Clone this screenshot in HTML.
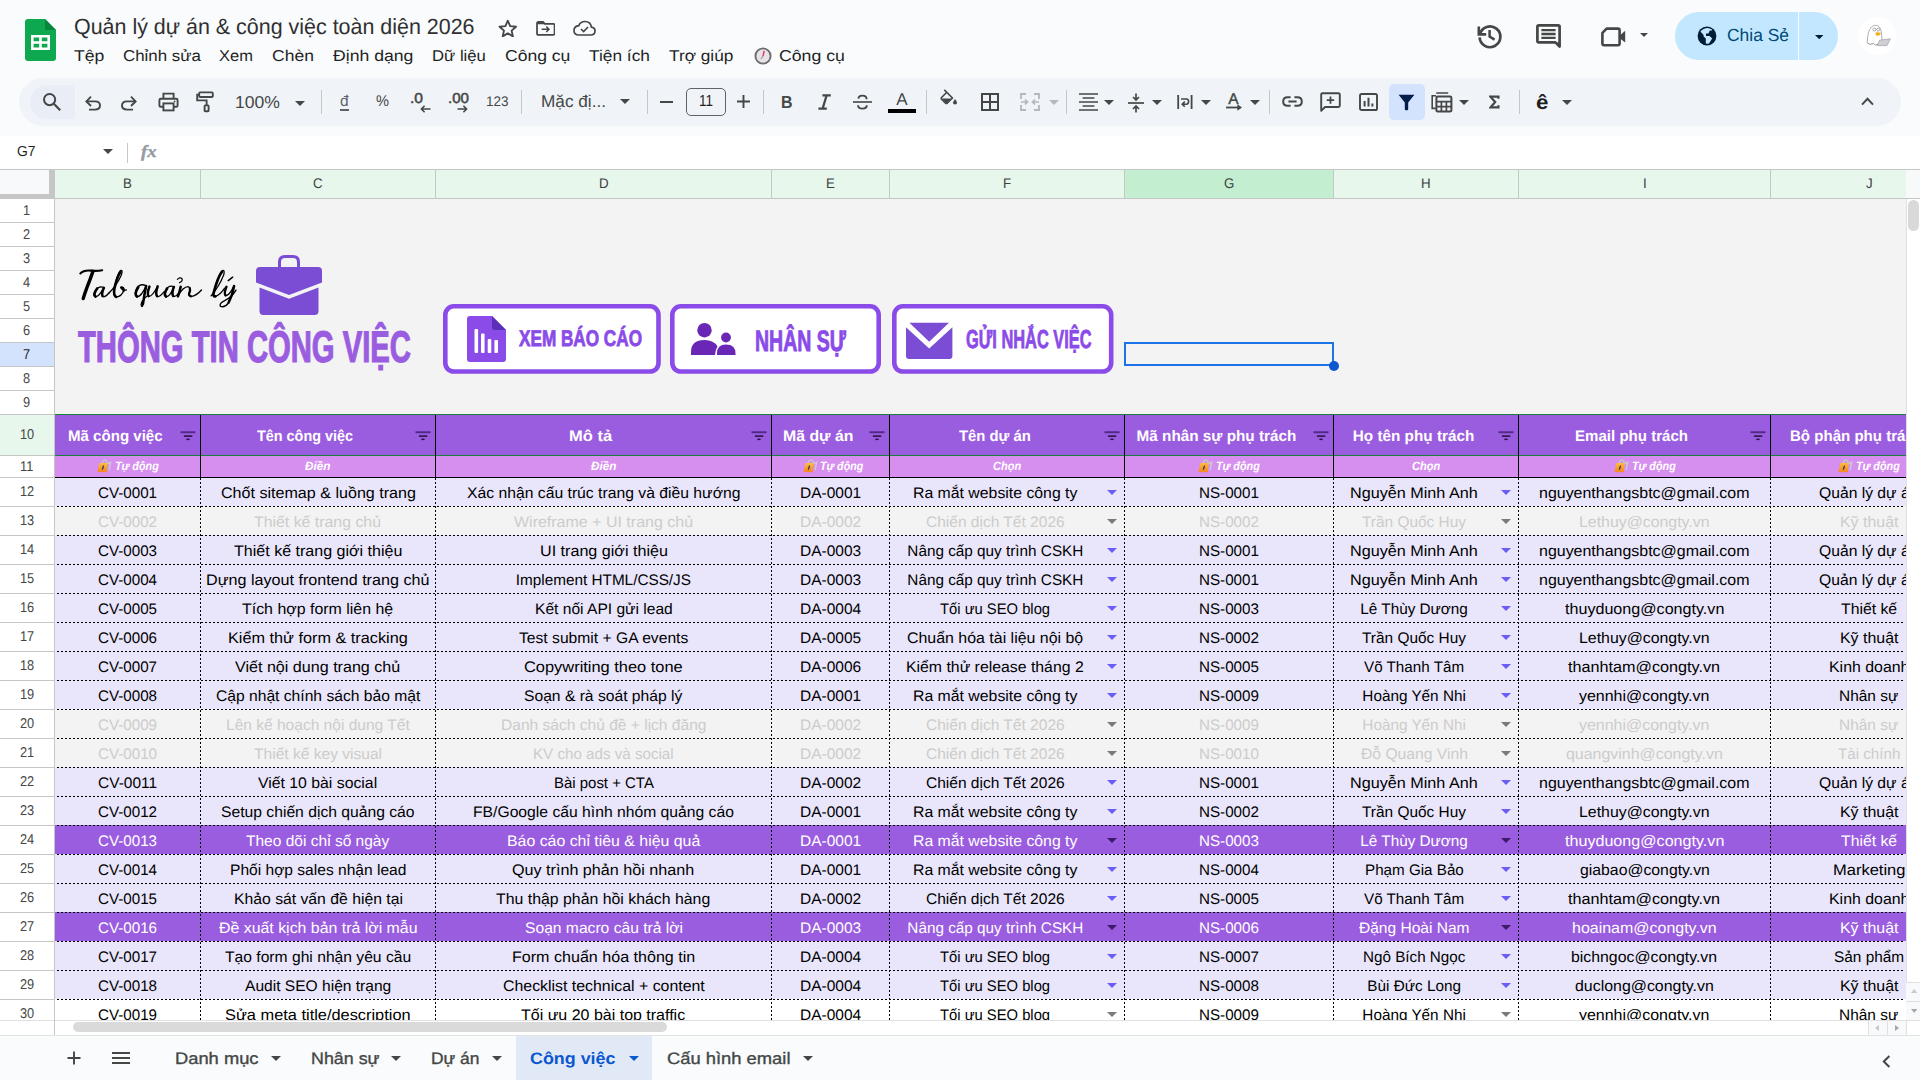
<!DOCTYPE html>
<html><head><meta charset="utf-8"><title>Quản lý dự án &amp; công việc toàn diện 2026</title><style>
html,body{margin:0;padding:0}
body{width:1920px;height:1080px;overflow:hidden;position:relative;background:#f9fbfd;font-family:'Liberation Sans',sans-serif;text-rendering:geometricPrecision}
.b{position:absolute;display:block}
.t{position:absolute;white-space:pre;transform-origin:0 50%;display:block}
#grid{position:absolute;left:0;top:169px;width:1906px;height:851px;overflow:hidden}
#gi{position:absolute;left:0;top:-169px;width:1968px;height:1080px}
</style></head>
<body>
<svg width="0" height="0" style="position:absolute"><defs><linearGradient id="lg" x1="0" y1="0" x2="0" y2="1"><stop offset="0" stop-color="#fdbf3a"/><stop offset="1" stop-color="#f4831f"/></linearGradient></defs></svg>
<svg class=b style="left:25px;top:19px;" width="31" height="42" viewBox="0 0 31 42"><path d="M3 0 H20 L31 11 V39 Q31 42 28 42 H3 Q0 42 0 39 V3 Q0 0 3 0z" fill="#0da84f"/><path d="M20 0 L31 11 H20z" fill="#07873c"/><path d="M6 16 H25 V31 H6z M8.6 18.6 V22.2 H14.2 V18.6z M16.8 18.6 V22.2 H22.4 V18.6z M8.6 24.8 V28.4 H14.2 V24.8z M16.8 24.8 V28.4 H22.4 V24.8z" fill="#fff" fill-rule="evenodd"/></svg>
<span class=t style="left:73.50px;top:11.78px;font:normal normal 22px 'Liberation Sans',sans-serif;line-height:29px;color:#303030;transform:scaleX(0.9744);">Quản lý dự án &amp; công việc toàn diện 2026</span>
<svg class=b style="left:498.2px;top:18.5px;" width="19.6" height="18.5" viewBox="0 0 18 17"><path d="M9 1.6 L11.2 6.6 L16.6 7.1 L12.5 10.7 L13.7 16 L9 13.2 L4.3 16 L5.5 10.7 L1.4 7.1 L6.8 6.6z" fill="none" stroke="#444746" stroke-width="1.7" stroke-linejoin="round"/></svg>
<svg class=b style="left:535.7px;top:20.9px;" width="19.6" height="14.8" viewBox="0 0 21 16"><path d="M1 2.5 Q1 1 2.5 1 H7.5 L9.5 3 H18.5 Q20 3 20 4.5 V13.5 Q20 15 18.5 15 H2.5 Q1 15 1 13.5z" fill="none" stroke="#444746" stroke-width="1.9"/><path d="M1 3.4 V2.5 Q1 1 2.5 1 H7.5 L9.8 3.4z" fill="#444746"/><path d="M6 9 H13.5 M11 6 L14 9 L11 12" fill="none" stroke="#444746" stroke-width="1.6"/></svg>
<svg class=b style="left:573px;top:20px;" width="23" height="16" viewBox="0 0 23 16"><path d="M6 15 H17.5 Q22 15 22 11 Q22 7.5 18.4 7.1 Q17.6 1.5 11.8 1.5 Q7.4 1.5 5.8 5.6 Q1 6.2 1 10.4 Q1 15 6 15z" fill="none" stroke="#444746" stroke-width="1.7"/><path d="M8 9 L10.6 11.5 L15 7" fill="none" stroke="#444746" stroke-width="1.7"/></svg>
<span class=t style="left:73.50px;top:46.59px;font:normal normal 15.6px 'Liberation Sans',sans-serif;line-height:20px;color:#1f1f1f;transform:scaleX(1.1312);">Tệp</span>
<span class=t style="left:122.50px;top:46.59px;font:normal normal 15.6px 'Liberation Sans',sans-serif;line-height:20px;color:#1f1f1f;transform:scaleX(1.0822);">Chỉnh sửa</span>
<span class=t style="left:219.00px;top:46.59px;font:normal normal 15.6px 'Liberation Sans',sans-serif;line-height:20px;color:#1f1f1f;transform:scaleX(1.0568);">Xem</span>
<span class=t style="left:272.00px;top:46.59px;font:normal normal 15.6px 'Liberation Sans',sans-serif;line-height:20px;color:#1f1f1f;transform:scaleX(1.1239);">Chèn</span>
<span class=t style="left:332.50px;top:46.59px;font:normal normal 15.6px 'Liberation Sans',sans-serif;line-height:20px;color:#1f1f1f;transform:scaleX(1.1309);">Định dạng</span>
<span class=t style="left:431.50px;top:46.59px;font:normal normal 15.6px 'Liberation Sans',sans-serif;line-height:20px;color:#1f1f1f;transform:scaleX(1.0713);">Dữ liệu</span>
<span class=t style="left:504.50px;top:46.59px;font:normal normal 15.6px 'Liberation Sans',sans-serif;line-height:20px;color:#1f1f1f;transform:scaleX(1.1258);">Công cụ</span>
<span class=t style="left:589.00px;top:46.59px;font:normal normal 15.6px 'Liberation Sans',sans-serif;line-height:20px;color:#1f1f1f;transform:scaleX(1.1095);">Tiện ích</span>
<span class=t style="left:668.50px;top:46.59px;font:normal normal 15.6px 'Liberation Sans',sans-serif;line-height:20px;color:#1f1f1f;transform:scaleX(1.1068);">Trợ giúp</span>
<span class=t style="left:779.00px;top:46.59px;font:normal normal 15.6px 'Liberation Sans',sans-serif;line-height:20px;color:#1f1f1f;transform:scaleX(1.1344);">Công cụ</span>
<svg class=b style="left:754px;top:47px;" width="18" height="18" viewBox="0 0 18 18"><circle cx="9" cy="9" r="7.6" fill="#e9e2e4" stroke="#6b6b70" stroke-width="1.9"/><path d="M9 9 L10.2 3.8" stroke="#d4386c" stroke-width="1.4"/><path d="M9 9 L7 12" stroke="#9a9aa0" stroke-width="1.2"/></svg>
<svg class=b style="left:1475px;top:21px;" width="30" height="30" viewBox="0 0 30 30"><path d="M4.9 13.2 A10.4 10.4 0 1 1 4.6 16.4" fill="none" stroke="#444746" stroke-width="2.7"/><path d="M3.8 5.6 V13.4 H11.2" fill="none" stroke="#444746" stroke-width="2.6"/><path d="M14.6 9 V15.6 L19.6 18.6" fill="none" stroke="#444746" stroke-width="2.5"/></svg>
<svg class=b style="left:1536px;top:24px;" width="26" height="25" viewBox="0 0 26 25"><path d="M2.8 1.4 H22.2 Q23.6 1.4 23.6 2.8 V22.6 L19.4 18.4 H2.8 Q1.4 18.4 1.4 17 V2.8 Q1.4 1.4 2.8 1.4z" fill="none" stroke="#444746" stroke-width="2.7" stroke-linejoin="round"/><path d="M5.4 6.2 H19.6 M5.4 10 H19.6 M5.4 13.8 H19.6" stroke="#444746" stroke-width="2.3"/><path d="M19.4 18.4 L23.6 22.6 V18.4z" fill="#444746"/></svg>
<svg class=b style="left:1600px;top:26px;" width="28" height="21" viewBox="0 0 28 21"><path d="M6.6 2.6 H18 Q19.6 2.6 19.6 4.2 V17.6 Q19.6 19.2 18 19.2 H4 Q2.4 19.2 2.4 17.6 V6.8z" fill="none" stroke="#444746" stroke-width="2.6" stroke-linejoin="round"/><path d="M20 9.2 L25.2 4.8 V16.6 L20 12.4z" fill="#444746"/></svg>
<svg class=b style="left:1639.8px;top:33.3px;" width="8" height="4" viewBox="0 0 8 4"><path d="M0 0H8L4.0 4z" fill="#444746"/></svg>
<div class=b style="left:1675px;top:12px;width:163px;height:48px;border-radius:24px;background:#c2e7ff"></div>
<div class=b style="left:1798px;top:12px;width:1.2px;height:48px;background:#f9fbfd;"></div>
<svg class=b style="left:1697px;top:26px;" width="20" height="20" viewBox="0 0 20 20"><circle cx="10" cy="10" r="9.4" fill="#001d35"/><path d="M8.6 2.2 Q5.2 3 3.4 5.6 L6.6 9 V10.6 L8.8 12.6 V17.6 Q10.4 18 12 17.4 L15.2 12.4 L12.6 10 H9 V7.6 L11.4 7.4 L12.8 4.6 H15 L15 3.6 Q12.4 1.6 8.6 2.2z" fill="#c2e7ff"/></svg>
<span class=t style="left:1726.50px;top:23.74px;font:normal normal 17.5px 'Liberation Sans',sans-serif;line-height:23px;color:#004a77;transform:scaleX(0.9957);">Chia Sẻ</span>
<svg class=b style="left:1814.8px;top:34.6px;" width="8.4" height="4.2" viewBox="0 0 8.4 4.2"><path d="M0 0H8.4L4.2 4.2z" fill="#001d35"/></svg>
<div class=b style="left:1858px;top:17px;width:38px;height:38px;border-radius:50%;background:#fff"></div>
<svg class=b style="left:1864px;top:23px;" width="28" height="26" viewBox="0 0 28 26"><path d="M3.2 19.5 Q3.6 8 7.4 4 Q10.4 1.2 13.6 2.6 Q17.4 4.6 17.6 12 L18.2 19" fill="#fff" stroke="#9a9a9a" stroke-width="0.8"/><circle cx="10.4" cy="6.6" r="1.5" fill="none" stroke="#8a8a8a" stroke-width="0.7"/><circle cx="14.2" cy="6.6" r="1.5" fill="none" stroke="#8a8a8a" stroke-width="0.7"/><path d="M11.6 9.6 Q14.4 8.6 17 10.2 Q15.6 13.2 12.4 12.6 Q11 11.4 11.6 9.6z" fill="#f2b01e"/><path d="M15.6 17.2 L26.4 15.8 L23 22.6 H13.4z" fill="#cfcfd4" stroke="#9d9da6" stroke-width="0.7"/><path d="M3 19.6 L6 21.4 L9.4 20.4 L11.6 22.2 L14 21.2" fill="none" stroke="#8a8a8a" stroke-width="0.9"/></svg>
<div class=b style="left:19px;top:78px;width:1882px;height:48px;border-radius:24px;background:#f0f4f9"></div>
<div class=b style="left:30px;top:85px;width:45px;height:34px;border-radius:17px 0 0 17px;background:#e9eef6"></div>
<svg class=b style="left:42px;top:92px;" width="20" height="20" viewBox="0 0 20 20"><circle cx="7.6" cy="7.6" r="5.6" fill="none" stroke="#444746" stroke-width="2"/><path d="M11.8 11.8 L18.2 18.2" fill="none" stroke="#444746" stroke-width="2.2"/></svg>
<svg class=b style="left:84px;top:93px;" width="18" height="18" viewBox="0 0 18 18"><path d="M2.6 8.4 H11 Q16 8.4 16 12.6 Q16 16.6 11 16.6 H5" fill="none" stroke="#444746" stroke-width="1.9"/><path d="M7 3.6 L2.4 8.4 L7 13" fill="none" stroke="#444746" stroke-width="1.9"/></svg>
<svg class=b style="left:120px;top:93px;" width="18" height="18" viewBox="0 0 18 18"><path d="M15.4 8.4 H7 Q2 8.4 2 12.6 Q2 16.6 7 16.6 H13" fill="none" stroke="#444746" stroke-width="1.9"/><path d="M11 3.6 L15.6 8.4 L11 13" fill="none" stroke="#444746" stroke-width="1.9"/></svg>
<svg class=b style="left:158px;top:92px;" width="21" height="20" viewBox="0 0 21 20"><path d="M5.4 6.6 V1.6 H15.6 V6.6" fill="none" stroke="#444746" stroke-width="1.9"/><path d="M5.2 14.8 H2.8 Q1.4 14.8 1.4 13.4 V8.2 Q1.4 6.8 2.8 6.8 H18.2 Q19.6 6.8 19.6 8.2 V13.4 Q19.6 14.8 18.2 14.8 H15.8" fill="none" stroke="#444746" stroke-width="1.9"/><rect x="5.4" y="11.4" width="10.2" height="7" fill="none" stroke="#444746" stroke-width="1.9"/><circle cx="16.6" cy="9.4" r="0.9" fill="#444746"/></svg>
<svg class=b style="left:196px;top:91px;" width="20" height="22" viewBox="0 0 20 22"><rect x="3.2" y="1.4" width="13.6" height="4.6" rx="1" fill="none" stroke="#444746" stroke-width="1.9"/><path d="M3.2 3.6 H1.2 V9.4 H10.6 V14" fill="none" stroke="#444746" stroke-width="1.9"/><rect x="8.6" y="14.4" width="4" height="5.8" rx="0.6" fill="none" stroke="#444746" stroke-width="1.9"/></svg>
<span class=t style="left:234.80px;top:91.11px;font:normal normal 17.3px 'Liberation Sans',sans-serif;line-height:22px;color:#444746;transform:scaleX(1.0180);">100%</span>
<svg class=b style="left:295.0px;top:100.5px;" width="10" height="5" viewBox="0 0 10 5"><path d="M0 0H10L5.0 5z" fill="#444746"/></svg>
<div class=b style="left:321px;top:90px;width:1px;height:24px;background:#c7c7c7;"></div>
<span class=t style="left:340.00px;top:92.13px;font:normal normal 15.5px 'Liberation Sans',sans-serif;line-height:20px;color:#5f6368;">đ</span>
<div class=b style="left:340px;top:109.3px;width:9px;height:1.3px;background:#5f6368;"></div>
<span class=t style="left:376.00px;top:92.23px;font:normal normal 15.5px 'Liberation Sans',sans-serif;line-height:20px;color:#444746;transform:scaleX(0.9422);">%</span>
<span class=t style="left:410.00px;top:90.48px;font:normal normal 14.5px 'Liberation Sans',sans-serif;line-height:19px;color:#444746;transform:scaleX(1.0749);-webkit-text-stroke:.5px #444746;">.0</span>
<svg class=b style="left:420px;top:105px;" width="11" height="8" viewBox="0 0 11 8"><path d="M10.5 4 H1.5 M4.6 .8 L1.4 4 L4.6 7.2" fill="none" stroke="#444746" stroke-width="1.6"/></svg>
<span class=t style="left:448.00px;top:90.48px;font:normal normal 14.5px 'Liberation Sans',sans-serif;line-height:19px;color:#444746;transform:scaleX(1.0411);-webkit-text-stroke:.5px #444746;">.00</span>
<svg class=b style="left:457px;top:105px;" width="11" height="8" viewBox="0 0 11 8"><path d="M.5 4 H9.5 M6.4 .8 L9.6 4 L6.4 7.2" fill="none" stroke="#444746" stroke-width="1.6"/></svg>
<span class=t style="left:486.00px;top:92.15px;font:normal normal 14px 'Liberation Sans',sans-serif;line-height:18px;color:#444746;transform:scaleX(0.9632);">123</span>
<div class=b style="left:521px;top:90px;width:1px;height:24px;background:#c7c7c7;"></div>
<span class=t style="left:540.50px;top:90.91px;font:normal normal 17px 'Liberation Sans',sans-serif;line-height:22px;color:#444746;transform:scaleX(1.0117);">Mặc đị...</span>
<svg class=b style="left:620.0px;top:98.5px;" width="10" height="5" viewBox="0 0 10 5"><path d="M0 0H10L5.0 5z" fill="#444746"/></svg>
<div class=b style="left:647px;top:90px;width:1px;height:24px;background:#c7c7c7;"></div>
<div class=b style="left:660px;top:100.8px;width:13px;height:1.9px;background:#444746;"></div>
<div class=b style="left:686px;top:88px;width:38px;height:26px;border:1px solid #5f6368;border-radius:5px"></div>
<span class=t style="left:699.00px;top:91.46px;font:normal normal 16px 'Liberation Sans',sans-serif;line-height:21px;color:#1f1f1f;transform:scaleX(0.8429);">11</span>
<svg class=b style="left:737px;top:95px;" width="13" height="13" viewBox="0 0 13 13"><path d="M6.5 0V13M0 6.5H13" fill="none" stroke="#444746" stroke-width="1.9"/></svg>
<div class=b style="left:763px;top:90px;width:1px;height:24px;background:#c7c7c7;"></div>
<span class=t style="left:781.00px;top:90.64px;font:normal bold 17.5px 'Liberation Sans',sans-serif;line-height:23px;color:#444746;transform:scaleX(0.9098);">B</span>
<svg class=b style="left:817px;top:94px;" width="15" height="16" viewBox="0 0 15 16"><path d="M5.4 1.4 H13.8 M1.4 14.6 H9.8 M9.6 1.4 L5.6 14.6" fill="none" stroke="#444746" stroke-width="2.2"/></svg>
<svg class=b style="left:852px;top:93px;" width="21" height="18" viewBox="0 0 21 18"><path d="M1 9 H20" fill="none" stroke="#444746" stroke-width="1.6"/><path d="M14.6 6.2 Q14.6 2.6 10.4 2.6 Q6.6 2.6 6.4 5.6" fill="none" stroke="#444746" stroke-width="1.9"/><path d="M6 12.2 Q6.2 15.6 10.4 15.6 Q14.8 15.6 14.8 12.2" fill="none" stroke="#444746" stroke-width="1.9"/></svg>
<span class=t style="left:896.33px;top:88.61px;font:normal normal 17px 'Liberation Sans',sans-serif;line-height:22px;color:#444746;">A</span>
<div class=b style="left:888px;top:109px;width:28px;height:4.2px;background:#000;"></div>
<div class=b style="left:926px;top:90px;width:1px;height:24px;background:#c7c7c7;"></div>
<svg class=b style="left:940px;top:88.5px;" width="19" height="17.3" viewBox="0 0 22 20"><path d="M5 1 L14.4 10.4 L8.4 16.4 Q7.4 17.2 6.4 16.4 L1.8 11.8 Q1 10.8 1.8 9.8 L7.6 4" fill="none" stroke="#444746" stroke-width="1.8"/><path d="M2 11 H13.6 L8 16.6 Q7.4 17 6.8 16.6z" fill="#444746"/><path d="M17.4 11.6 Q19.8 14.8 19.8 16 Q19.8 18 17.4 18 Q15 18 15 16 Q15 14.8 17.4 11.6z" fill="#444746"/></svg>
<svg class=b style="left:981px;top:93px;" width="18" height="18" viewBox="0 0 18 18"><rect x="1" y="1" width="16" height="16" fill="none" stroke="#444746" stroke-width="2"/><path d="M9 1V17M1 9H17" fill="none" stroke="#444746" stroke-width="2"/></svg>
<svg class=b style="left:1020px;top:93px;" width="20" height="18" viewBox="0 0 20 18"><path d="M1 6 V1 H6 M14 1 H19 V6 M19 12 V17 H14 M6 17 H1 V12" fill="none" stroke="#b4b7bb" stroke-width="1.8"/><path d="M1 9 H7.4 M5 6.6 L7.6 9 L5 11.4 M19 9 H12.6 M15 6.6 L12.4 9 L15 11.4" fill="none" stroke="#b4b7bb" stroke-width="1.6"/></svg>
<svg class=b style="left:1049.0px;top:100.0px;" width="10" height="5" viewBox="0 0 10 5"><path d="M0 0H10L5.0 5z" fill="#b4b7bb"/></svg>
<div class=b style="left:1066px;top:90px;width:1px;height:24px;background:#c7c7c7;"></div>
<svg class=b style="left:1079px;top:93px;" width="19" height="18" viewBox="0 0 19 18"><path d="M0 1 H19 M3.6 5 H15.4 M0 9 H19 M3.6 13 H15.4 M0 17 H19" fill="none" stroke="#444746" stroke-width="1.6"/></svg>
<svg class=b style="left:1104.0px;top:100.0px;" width="10" height="5" viewBox="0 0 10 5"><path d="M0 0H10L5.0 5z" fill="#444746"/></svg>
<svg class=b style="left:1128px;top:93px;" width="16" height="20" viewBox="0 0 16 20"><path d="M0 10 H16" fill="none" stroke="#444746" stroke-width="1.7"/><path d="M8 0.6 V6.4 M5 4 L8 7 L11 4 M8 19.4 V13.6 M5 16 L8 13 L11 16" fill="none" stroke="#444746" stroke-width="1.7"/></svg>
<svg class=b style="left:1152.0px;top:100.0px;" width="10" height="5" viewBox="0 0 10 5"><path d="M0 0H10L5.0 5z" fill="#444746"/></svg>
<svg class=b style="left:1177px;top:94px;" width="16" height="16" viewBox="0 0 16 16"><path d="M1.2 1 V15 M14.6 1 V15" fill="none" stroke="#444746" stroke-width="1.8"/><path d="M4 5 H9.4 Q11.6 5 11.6 7.6 Q11.6 10.2 9.4 10.2 H5.4 M7.8 7.6 L5.2 10.2 L7.8 12.8" fill="none" stroke="#444746" stroke-width="1.6"/></svg>
<svg class=b style="left:1201.0px;top:100.0px;" width="10" height="5" viewBox="0 0 10 5"><path d="M0 0H10L5.0 5z" fill="#444746"/></svg>
<span class=t style="left:1228.33px;top:90.23px;font:normal normal 15.5px 'Liberation Sans',sans-serif;line-height:20px;color:#444746;-webkit-text-stroke:.4px #444746;">A</span>
<svg class=b style="left:1226px;top:104.3px;" width="17" height="7" viewBox="0 0 17 7"><path d="M0 3.5 H13" fill="none" stroke="#444746" stroke-width="1.8"/><path d="M11.4 0.2 L16 3.5 L11.4 6.8z" fill="#444746"/></svg>
<svg class=b style="left:1250.0px;top:100.0px;" width="10" height="5" viewBox="0 0 10 5"><path d="M0 0H10L5.0 5z" fill="#444746"/></svg>
<div class=b style="left:1269px;top:90px;width:1px;height:24px;background:#c7c7c7;"></div>
<svg class=b style="left:1282px;top:96px;" width="21" height="11" viewBox="0 0 21 11"><path d="M8.6 1.2 H5.6 Q1.2 1.2 1.2 5.5 Q1.2 9.8 5.6 9.8 H8.6 M12.4 1.2 H15.4 Q19.8 1.2 19.8 5.5 Q19.8 9.8 15.4 9.8 H12.4 M6.4 5.5 H14.6" fill="none" stroke="#444746" stroke-width="2"/></svg>
<svg class=b style="left:1320px;top:92px;" width="21" height="21" viewBox="0 0 21 21"><path d="M2.4 1.2 H18.4 Q19.8 1.2 19.8 2.6 V13.6 Q19.8 15 18.4 15 H5 L1.2 18.8 V2.6 Q1.2 1.2 2.4 1.2z" fill="none" stroke="#444746" stroke-width="1.9" stroke-linejoin="round"/><path d="M10.5 4.4 V11.8 M6.8 8.1 H14.2" fill="none" stroke="#444746" stroke-width="1.8"/></svg>
<svg class=b style="left:1359px;top:93px;" width="19" height="18" viewBox="0 0 19 18"><rect x="1" y="1" width="17" height="16" rx="1.6" fill="none" stroke="#444746" stroke-width="1.9"/><path d="M5.6 13.4 V8 M9.5 13.4 V4.8 M13.4 13.4 V10.4" fill="none" stroke="#444746" stroke-width="2"/></svg>
<div class=b style="left:1389px;top:84px;width:36px;height:36px;border-radius:5px;background:#d3e3fd"></div>
<svg class=b style="left:1398px;top:94px;" width="17" height="17" viewBox="0 0 17 17"><path d="M.6 .8 H16.4 L10.2 8.6 V15.2 Q10.2 16.2 9.2 16.2 H7.8 Q6.8 16.2 6.8 15.2 V8.6z" fill="#041e49"/></svg>
<svg class=b style="left:1431px;top:92px;" width="22" height="21" viewBox="0 0 22 21"><path d="M5 3.8 H1.2 V16.4 H4.6 M5.2 1 H17.2" fill="none" stroke="#444746" stroke-width="1.6" stroke="#5f6368"/><rect x="5.4" y="4.6" width="15" height="15" rx="1.4" fill="none" stroke="#444746" stroke-width="2"/><path d="M5.4 9.6 H20.4 M5.4 14.6 H20.4 M10.4 9.6 V19.6 M15.4 9.6 V19.6" fill="none" stroke="#444746" stroke-width="1.7"/></svg>
<svg class=b style="left:1459.0px;top:100.0px;" width="10" height="5" viewBox="0 0 10 5"><path d="M0 0H10L5.0 5z" fill="#444746"/></svg>
<svg class=b style="left:1489px;top:95px;" width="10.6" height="14.2" viewBox="0 0 13 16"><path d="M11.6 4 V1.4 H1.8 L7.6 8 L1.8 14.6 H11.6 V12" fill="none" stroke="#444746" stroke-width="2.7" stroke-linejoin="miter"/></svg>
<div class=b style="left:1519px;top:90px;width:1px;height:24px;background:#c7c7c7;"></div>
<span class=t style="left:1536.20px;top:90.07px;font:normal bold 20px 'Liberation Sans',sans-serif;line-height:26px;color:#1f1f1f;transform:scaleX(1.1146);">ê</span>
<svg class=b style="left:1562.0px;top:100.0px;" width="10" height="5" viewBox="0 0 10 5"><path d="M0 0H10L5.0 5z" fill="#444746"/></svg>
<svg class=b style="left:1861px;top:97px;" width="13" height="9" viewBox="0 0 13 9"><path d="M1 7.6 L6.5 1.8 L12 7.6" fill="none" stroke="#444746" stroke-width="2"/></svg>
<div class=b style="left:0px;top:136px;width:1920px;height:33px;background:#ffffff;"></div>
<span class=t style="left:17.00px;top:143.28px;font:normal normal 14.5px 'Liberation Sans',sans-serif;line-height:19px;color:#1f1f1f;transform:scaleX(0.9564);">G7</span>
<svg class=b style="left:103.0px;top:149.0px;" width="10" height="5" viewBox="0 0 10 5"><path d="M0 0H10L5.0 5z" fill="#444746"/></svg>
<div class=b style="left:127px;top:143px;width:1px;height:20px;background:#c7c7c7;"></div>
<span class=t style="left:140.50px;top:141.26px;font:italic bold 17px 'Liberation Serif',serif;line-height:22px;color:#959ba1;transform:scaleX(1.0937);-webkit-text-stroke:.35px #959ba1;">fx</span>
<div id=grid><div id=gi><div class=b style="left:55px;top:199px;width:1913px;height:216px;background:#f3f3f3;"></div>
<div class=b style="left:0px;top:169px;width:1968px;height:1px;background:#c4c7c5;"></div>
<div class=b style="left:55px;top:170px;width:145px;height:28px;background:#e7f7ec;"></div>
<div class=b style="left:200px;top:170px;width:1px;height:28px;background:#c4c7c5;"></div>
<span class=t style="left:123.06px;top:174.15px;font:normal normal 14px 'Liberation Sans',sans-serif;line-height:18px;color:#3c4043;transform:scaleX(0.9500);">B</span>
<div class=b style="left:201px;top:170px;width:234px;height:28px;background:#e7f7ec;"></div>
<div class=b style="left:435px;top:170px;width:1px;height:28px;background:#c4c7c5;"></div>
<span class=t style="left:313.19px;top:174.15px;font:normal normal 14px 'Liberation Sans',sans-serif;line-height:18px;color:#3c4043;transform:scaleX(0.9500);">C</span>
<div class=b style="left:436px;top:170px;width:335px;height:28px;background:#e7f7ec;"></div>
<div class=b style="left:771px;top:170px;width:1px;height:28px;background:#c4c7c5;"></div>
<span class=t style="left:598.69px;top:174.15px;font:normal normal 14px 'Liberation Sans',sans-serif;line-height:18px;color:#3c4043;transform:scaleX(0.9500);">D</span>
<div class=b style="left:772px;top:170px;width:117px;height:28px;background:#e7f7ec;"></div>
<div class=b style="left:889px;top:170px;width:1px;height:28px;background:#c4c7c5;"></div>
<span class=t style="left:826.06px;top:174.15px;font:normal normal 14px 'Liberation Sans',sans-serif;line-height:18px;color:#3c4043;transform:scaleX(0.9500);">E</span>
<div class=b style="left:890px;top:170px;width:234px;height:28px;background:#e7f7ec;"></div>
<div class=b style="left:1124px;top:170px;width:1px;height:28px;background:#c4c7c5;"></div>
<span class=t style="left:1002.93px;top:174.15px;font:normal normal 14px 'Liberation Sans',sans-serif;line-height:18px;color:#3c4043;transform:scaleX(0.9500);">F</span>
<div class=b style="left:1125px;top:170px;width:208px;height:28px;background:#c4eed0;"></div>
<div class=b style="left:1333px;top:170px;width:1px;height:28px;background:#c4c7c5;"></div>
<span class=t style="left:1223.83px;top:174.15px;font:normal normal 14px 'Liberation Sans',sans-serif;line-height:18px;color:#3c4043;transform:scaleX(0.9500);">G</span>
<div class=b style="left:1334px;top:170px;width:184px;height:28px;background:#e7f7ec;"></div>
<div class=b style="left:1518px;top:170px;width:1px;height:28px;background:#c4c7c5;"></div>
<span class=t style="left:1421.19px;top:174.15px;font:normal normal 14px 'Liberation Sans',sans-serif;line-height:18px;color:#3c4043;transform:scaleX(0.9500);">H</span>
<div class=b style="left:1519px;top:170px;width:251px;height:28px;background:#e7f7ec;"></div>
<div class=b style="left:1770px;top:170px;width:1px;height:28px;background:#c4c7c5;"></div>
<span class=t style="left:1642.65px;top:174.15px;font:normal normal 14px 'Liberation Sans',sans-serif;line-height:18px;color:#3c4043;transform:scaleX(0.9500);">I</span>
<div class=b style="left:1771px;top:170px;width:196px;height:28px;background:#e7f7ec;"></div>
<div class=b style="left:1967px;top:170px;width:1px;height:28px;background:#c4c7c5;"></div>
<span class=t style="left:1865.67px;top:174.15px;font:normal normal 14px 'Liberation Sans',sans-serif;line-height:18px;color:#3c4043;transform:scaleX(0.9500);">J</span>
<div class=b style="left:55px;top:198px;width:1913px;height:1px;background:#c4c7c5;"></div>
<div class=b style="left:0px;top:170px;width:49px;height:24px;background:#f8f9fa;"></div>
<div class=b style="left:49px;top:170px;width:6px;height:29px;background:#c6c6c6;"></div>
<div class=b style="left:0px;top:194px;width:55px;height:5px;background:#c6c6c6;"></div>
<div class=b style="left:0px;top:199px;width:54px;height:822px;background:#ffffff;"></div>
<div class=b style="left:54px;top:199px;width:1px;height:822px;background:#c4c7c5;"></div>
<div class=b style="left:0px;top:222px;width:54px;height:1px;background:#c4c7c5;"></div>
<span class=t style="left:23.45px;top:201.58px;font:normal normal 14.2px 'Liberation Sans',sans-serif;line-height:18px;color:#444746;transform:scaleX(0.9000);">1</span>
<div class=b style="left:0px;top:246px;width:54px;height:1px;background:#c4c7c5;"></div>
<span class=t style="left:23.45px;top:225.58px;font:normal normal 14.2px 'Liberation Sans',sans-serif;line-height:18px;color:#444746;transform:scaleX(0.9000);">2</span>
<div class=b style="left:0px;top:270px;width:54px;height:1px;background:#c4c7c5;"></div>
<span class=t style="left:23.45px;top:249.58px;font:normal normal 14.2px 'Liberation Sans',sans-serif;line-height:18px;color:#444746;transform:scaleX(0.9000);">3</span>
<div class=b style="left:0px;top:294px;width:54px;height:1px;background:#c4c7c5;"></div>
<span class=t style="left:23.45px;top:273.58px;font:normal normal 14.2px 'Liberation Sans',sans-serif;line-height:18px;color:#444746;transform:scaleX(0.9000);">4</span>
<div class=b style="left:0px;top:318px;width:54px;height:1px;background:#c4c7c5;"></div>
<span class=t style="left:23.45px;top:297.58px;font:normal normal 14.2px 'Liberation Sans',sans-serif;line-height:18px;color:#444746;transform:scaleX(0.9000);">5</span>
<div class=b style="left:0px;top:342px;width:54px;height:1px;background:#c4c7c5;"></div>
<span class=t style="left:23.45px;top:321.58px;font:normal normal 14.2px 'Liberation Sans',sans-serif;line-height:18px;color:#444746;transform:scaleX(0.9000);">6</span>
<div class=b style="left:0px;top:343px;width:54px;height:23px;background:#d3e3fd;"></div>
<div class=b style="left:0px;top:366px;width:54px;height:1px;background:#c4c7c5;"></div>
<span class=t style="left:23.45px;top:345.58px;font:normal normal 14.2px 'Liberation Sans',sans-serif;line-height:18px;color:#1f1f1f;transform:scaleX(0.9000);">7</span>
<div class=b style="left:0px;top:390px;width:54px;height:1px;background:#c4c7c5;"></div>
<span class=t style="left:23.45px;top:369.58px;font:normal normal 14.2px 'Liberation Sans',sans-serif;line-height:18px;color:#444746;transform:scaleX(0.9000);">8</span>
<div class=b style="left:0px;top:414px;width:54px;height:1px;background:#c4c7c5;"></div>
<span class=t style="left:23.45px;top:393.58px;font:normal normal 14.2px 'Liberation Sans',sans-serif;line-height:18px;color:#444746;transform:scaleX(0.9000);">9</span>
<div class=b style="left:0px;top:415px;width:54px;height:40px;background:#e7f7ec;"></div>
<div class=b style="left:0px;top:455px;width:54px;height:1px;background:#c4c7c5;"></div>
<span class=t style="left:19.90px;top:426.08px;font:normal normal 14.2px 'Liberation Sans',sans-serif;line-height:18px;color:#444746;transform:scaleX(0.9000);">10</span>
<div class=b style="left:0px;top:477px;width:54px;height:1px;background:#c4c7c5;"></div>
<span class=t style="left:20.37px;top:457.58px;font:normal normal 14.2px 'Liberation Sans',sans-serif;line-height:18px;color:#444746;transform:scaleX(0.9000);">11</span>
<div class=b style="left:0px;top:506px;width:54px;height:1px;background:#c4c7c5;"></div>
<span class=t style="left:19.90px;top:483.08px;font:normal normal 14.2px 'Liberation Sans',sans-serif;line-height:18px;color:#444746;transform:scaleX(0.9000);">12</span>
<div class=b style="left:0px;top:535px;width:54px;height:1px;background:#c4c7c5;"></div>
<span class=t style="left:19.90px;top:512.08px;font:normal normal 14.2px 'Liberation Sans',sans-serif;line-height:18px;color:#444746;transform:scaleX(0.9000);">13</span>
<div class=b style="left:0px;top:564px;width:54px;height:1px;background:#c4c7c5;"></div>
<span class=t style="left:19.90px;top:541.08px;font:normal normal 14.2px 'Liberation Sans',sans-serif;line-height:18px;color:#444746;transform:scaleX(0.9000);">14</span>
<div class=b style="left:0px;top:593px;width:54px;height:1px;background:#c4c7c5;"></div>
<span class=t style="left:19.90px;top:570.08px;font:normal normal 14.2px 'Liberation Sans',sans-serif;line-height:18px;color:#444746;transform:scaleX(0.9000);">15</span>
<div class=b style="left:0px;top:622px;width:54px;height:1px;background:#c4c7c5;"></div>
<span class=t style="left:19.90px;top:599.08px;font:normal normal 14.2px 'Liberation Sans',sans-serif;line-height:18px;color:#444746;transform:scaleX(0.9000);">16</span>
<div class=b style="left:0px;top:651px;width:54px;height:1px;background:#c4c7c5;"></div>
<span class=t style="left:19.90px;top:628.08px;font:normal normal 14.2px 'Liberation Sans',sans-serif;line-height:18px;color:#444746;transform:scaleX(0.9000);">17</span>
<div class=b style="left:0px;top:680px;width:54px;height:1px;background:#c4c7c5;"></div>
<span class=t style="left:19.90px;top:657.08px;font:normal normal 14.2px 'Liberation Sans',sans-serif;line-height:18px;color:#444746;transform:scaleX(0.9000);">18</span>
<div class=b style="left:0px;top:709px;width:54px;height:1px;background:#c4c7c5;"></div>
<span class=t style="left:19.90px;top:686.08px;font:normal normal 14.2px 'Liberation Sans',sans-serif;line-height:18px;color:#444746;transform:scaleX(0.9000);">19</span>
<div class=b style="left:0px;top:738px;width:54px;height:1px;background:#c4c7c5;"></div>
<span class=t style="left:19.90px;top:715.08px;font:normal normal 14.2px 'Liberation Sans',sans-serif;line-height:18px;color:#444746;transform:scaleX(0.9000);">20</span>
<div class=b style="left:0px;top:767px;width:54px;height:1px;background:#c4c7c5;"></div>
<span class=t style="left:19.90px;top:744.08px;font:normal normal 14.2px 'Liberation Sans',sans-serif;line-height:18px;color:#444746;transform:scaleX(0.9000);">21</span>
<div class=b style="left:0px;top:796px;width:54px;height:1px;background:#c4c7c5;"></div>
<span class=t style="left:19.90px;top:773.08px;font:normal normal 14.2px 'Liberation Sans',sans-serif;line-height:18px;color:#444746;transform:scaleX(0.9000);">22</span>
<div class=b style="left:0px;top:825px;width:54px;height:1px;background:#c4c7c5;"></div>
<span class=t style="left:19.90px;top:802.08px;font:normal normal 14.2px 'Liberation Sans',sans-serif;line-height:18px;color:#444746;transform:scaleX(0.9000);">23</span>
<div class=b style="left:0px;top:854px;width:54px;height:1px;background:#c4c7c5;"></div>
<span class=t style="left:19.90px;top:831.08px;font:normal normal 14.2px 'Liberation Sans',sans-serif;line-height:18px;color:#444746;transform:scaleX(0.9000);">24</span>
<div class=b style="left:0px;top:883px;width:54px;height:1px;background:#c4c7c5;"></div>
<span class=t style="left:19.90px;top:860.08px;font:normal normal 14.2px 'Liberation Sans',sans-serif;line-height:18px;color:#444746;transform:scaleX(0.9000);">25</span>
<div class=b style="left:0px;top:912px;width:54px;height:1px;background:#c4c7c5;"></div>
<span class=t style="left:19.90px;top:889.08px;font:normal normal 14.2px 'Liberation Sans',sans-serif;line-height:18px;color:#444746;transform:scaleX(0.9000);">26</span>
<div class=b style="left:0px;top:941px;width:54px;height:1px;background:#c4c7c5;"></div>
<span class=t style="left:19.90px;top:918.08px;font:normal normal 14.2px 'Liberation Sans',sans-serif;line-height:18px;color:#444746;transform:scaleX(0.9000);">27</span>
<div class=b style="left:0px;top:970px;width:54px;height:1px;background:#c4c7c5;"></div>
<span class=t style="left:19.90px;top:947.08px;font:normal normal 14.2px 'Liberation Sans',sans-serif;line-height:18px;color:#444746;transform:scaleX(0.9000);">28</span>
<div class=b style="left:0px;top:999px;width:54px;height:1px;background:#c4c7c5;"></div>
<span class=t style="left:19.90px;top:976.08px;font:normal normal 14.2px 'Liberation Sans',sans-serif;line-height:18px;color:#444746;transform:scaleX(0.9000);">29</span>
<div class=b style="left:0px;top:1028px;width:54px;height:1px;background:#c4c7c5;"></div>
<span class=t style="left:19.90px;top:1005.08px;font:normal normal 14.2px 'Liberation Sans',sans-serif;line-height:18px;color:#444746;transform:scaleX(0.9000);">30</span>
<div class=b style="left:55px;top:415px;width:1913px;height:41px;background:#9b5de0;"></div>
<div class=b style="left:55px;top:456px;width:1913px;height:22px;background:#d68fef;"></div>
<div class=b style="left:55px;top:414px;width:1913px;height:1px;background:#188038;"></div>
<div class=b style="left:55px;top:455px;width:1913px;height:1px;background:#188038;"></div>
<div class=b style="left:55px;top:477px;width:1913px;height:1px;background:#000;"></div>
<div class=b style="left:200px;top:415px;width:1px;height:63px;background:#000;"></div>
<span class=t style="left:67.69px;top:426.80px;font:normal bold 15.3px 'Liberation Sans',sans-serif;line-height:20px;color:#fff;transform:scaleX(0.9851);">Mã công việc</span>
<svg class=b style="left:179.5px;top:430.5px;" width="16" height="10" viewBox="0 0 16 10"><rect x="0.5" y="0.3" width="15" height="1.9" fill="#4f2b86"/><rect x="3.9" y="4.4" width="8.4" height="1.4" fill="#1d0b33"/><rect x="6.4" y="7.6" width="3.2" height="1.5" fill="#2a1248"/></svg>
<svg class=b style="left:96.9px;top:458.9px;" width="15" height="14" viewBox="0 0 15 14"><path d="M10.4 4.6 L13.6 3.3 L12.1 10.8" fill="none" stroke="#cbc9d6" stroke-width="1.5"/><path d="M4.9 4.6 Q5.6 0.9 7.9 0.9 Q10.3 0.9 10 4.6" fill="none" stroke="#c4c2cf" stroke-width="1.5"/><path d="M3 3.9 L10 4.1 Q10.7 4.2 10.6 4.9 L9.9 12.6 Q9.8 13.3 9.1 13.2 L1.1 12.9 Q0.4 12.8 0.6 12.1 L2.3 4.5 Q2.4 3.9 3 3.9z" fill="url(#lg)"/><path d="M6.6 6.6 L5.3 10.6" stroke="#2f2a66" stroke-width="1.3" fill="none"/></svg>
<span class=t style="left:114.90px;top:458.44px;font:italic bold 12px 'Liberation Sans',sans-serif;line-height:16px;color:#fff;transform:scaleX(0.9019);">Tự động</span>
<div class=b style="left:435px;top:415px;width:1px;height:63px;background:#000;"></div>
<span class=t style="left:257.48px;top:426.80px;font:normal bold 15.3px 'Liberation Sans',sans-serif;line-height:20px;color:#fff;transform:scaleX(0.9415);">Tên công việc</span>
<svg class=b style="left:414.5px;top:430.5px;" width="16" height="10" viewBox="0 0 16 10"><rect x="0.5" y="0.3" width="15" height="1.9" fill="#4f2b86"/><rect x="3.9" y="4.4" width="8.4" height="1.4" fill="#1d0b33"/><rect x="6.4" y="7.6" width="3.2" height="1.5" fill="#2a1248"/></svg>
<span class=t style="left:305.25px;top:458.44px;font:italic bold 12px 'Liberation Sans',sans-serif;line-height:16px;color:#fff;transform:scaleX(0.9805);">Điền</span>
<div class=b style="left:771px;top:415px;width:1px;height:63px;background:#000;"></div>
<span class=t style="left:569.46px;top:426.80px;font:normal bold 15.3px 'Liberation Sans',sans-serif;line-height:20px;color:#fff;transform:scaleX(1.0783);">Mô tả</span>
<svg class=b style="left:750.5px;top:430.5px;" width="16" height="10" viewBox="0 0 16 10"><rect x="0.5" y="0.3" width="15" height="1.9" fill="#4f2b86"/><rect x="3.9" y="4.4" width="8.4" height="1.4" fill="#1d0b33"/><rect x="6.4" y="7.6" width="3.2" height="1.5" fill="#2a1248"/></svg>
<span class=t style="left:590.75px;top:458.44px;font:italic bold 12px 'Liberation Sans',sans-serif;line-height:16px;color:#fff;transform:scaleX(0.9805);">Điền</span>
<div class=b style="left:889px;top:415px;width:1px;height:63px;background:#000;"></div>
<span class=t style="left:782.80px;top:426.80px;font:normal bold 15.3px 'Liberation Sans',sans-serif;line-height:20px;color:#fff;transform:scaleX(1.0348);">Mã dự án</span>
<svg class=b style="left:868.5px;top:430.5px;" width="16" height="10" viewBox="0 0 16 10"><rect x="0.5" y="0.3" width="15" height="1.9" fill="#4f2b86"/><rect x="3.9" y="4.4" width="8.4" height="1.4" fill="#1d0b33"/><rect x="6.4" y="7.6" width="3.2" height="1.5" fill="#2a1248"/></svg>
<svg class=b style="left:803.2px;top:458.9px;" width="15" height="14" viewBox="0 0 15 14"><path d="M10.4 4.6 L13.6 3.3 L12.1 10.8" fill="none" stroke="#cbc9d6" stroke-width="1.5"/><path d="M4.9 4.6 Q5.6 0.9 7.9 0.9 Q10.3 0.9 10 4.6" fill="none" stroke="#c4c2cf" stroke-width="1.5"/><path d="M3 3.9 L10 4.1 Q10.7 4.2 10.6 4.9 L9.9 12.6 Q9.8 13.3 9.1 13.2 L1.1 12.9 Q0.4 12.8 0.6 12.1 L2.3 4.5 Q2.4 3.9 3 3.9z" fill="url(#lg)"/><path d="M6.6 6.6 L5.3 10.6" stroke="#2f2a66" stroke-width="1.3" fill="none"/></svg>
<span class=t style="left:819.90px;top:458.44px;font:italic bold 12px 'Liberation Sans',sans-serif;line-height:16px;color:#fff;transform:scaleX(0.8896);">Tự động</span>
<div class=b style="left:1124px;top:415px;width:1px;height:63px;background:#000;"></div>
<span class=t style="left:958.59px;top:426.80px;font:normal bold 15.3px 'Liberation Sans',sans-serif;line-height:20px;color:#fff;transform:scaleX(0.9708);">Tên dự án</span>
<svg class=b style="left:1103.5px;top:430.5px;" width="16" height="10" viewBox="0 0 16 10"><rect x="0.5" y="0.3" width="15" height="1.9" fill="#4f2b86"/><rect x="3.9" y="4.4" width="8.4" height="1.4" fill="#1d0b33"/><rect x="6.4" y="7.6" width="3.2" height="1.5" fill="#2a1248"/></svg>
<span class=t style="left:992.92px;top:458.44px;font:italic bold 12px 'Liberation Sans',sans-serif;line-height:16px;color:#fff;transform:scaleX(0.9186);">Chọn</span>
<div class=b style="left:1333px;top:415px;width:1px;height:63px;background:#000;"></div>
<span class=t style="left:1136.57px;top:426.80px;font:normal bold 15.3px 'Liberation Sans',sans-serif;line-height:20px;color:#fff;">Mã nhân sự phụ trách</span>
<svg class=b style="left:1312.5px;top:430.5px;" width="16" height="10" viewBox="0 0 16 10"><rect x="0.5" y="0.3" width="15" height="1.9" fill="#4f2b86"/><rect x="3.9" y="4.4" width="8.4" height="1.4" fill="#1d0b33"/><rect x="6.4" y="7.6" width="3.2" height="1.5" fill="#2a1248"/></svg>
<svg class=b style="left:1198.4px;top:458.9px;" width="15" height="14" viewBox="0 0 15 14"><path d="M10.4 4.6 L13.6 3.3 L12.1 10.8" fill="none" stroke="#cbc9d6" stroke-width="1.5"/><path d="M4.9 4.6 Q5.6 0.9 7.9 0.9 Q10.3 0.9 10 4.6" fill="none" stroke="#c4c2cf" stroke-width="1.5"/><path d="M3 3.9 L10 4.1 Q10.7 4.2 10.6 4.9 L9.9 12.6 Q9.8 13.3 9.1 13.2 L1.1 12.9 Q0.4 12.8 0.6 12.1 L2.3 4.5 Q2.4 3.9 3 3.9z" fill="url(#lg)"/><path d="M6.6 6.6 L5.3 10.6" stroke="#2f2a66" stroke-width="1.3" fill="none"/></svg>
<span class=t style="left:1216.40px;top:458.44px;font:italic bold 12px 'Liberation Sans',sans-serif;line-height:16px;color:#fff;transform:scaleX(0.9019);">Tự động</span>
<div class=b style="left:1518px;top:415px;width:1px;height:63px;background:#000;"></div>
<span class=t style="left:1352.77px;top:426.80px;font:normal bold 15.3px 'Liberation Sans',sans-serif;line-height:20px;color:#fff;">Họ tên phụ trách</span>
<svg class=b style="left:1497.5px;top:430.5px;" width="16" height="10" viewBox="0 0 16 10"><rect x="0.5" y="0.3" width="15" height="1.9" fill="#4f2b86"/><rect x="3.9" y="4.4" width="8.4" height="1.4" fill="#1d0b33"/><rect x="6.4" y="7.6" width="3.2" height="1.5" fill="#2a1248"/></svg>
<span class=t style="left:1411.92px;top:458.44px;font:italic bold 12px 'Liberation Sans',sans-serif;line-height:16px;color:#fff;transform:scaleX(0.9186);">Chọn</span>
<div class=b style="left:1770px;top:415px;width:1px;height:63px;background:#000;"></div>
<span class=t style="left:1575.48px;top:426.80px;font:normal bold 15.3px 'Liberation Sans',sans-serif;line-height:20px;color:#fff;transform:scaleX(0.9850);">Email phụ trách</span>
<svg class=b style="left:1749.5px;top:430.5px;" width="16" height="10" viewBox="0 0 16 10"><rect x="0.5" y="0.3" width="15" height="1.9" fill="#4f2b86"/><rect x="3.9" y="4.4" width="8.4" height="1.4" fill="#1d0b33"/><rect x="6.4" y="7.6" width="3.2" height="1.5" fill="#2a1248"/></svg>
<svg class=b style="left:1613.9px;top:458.9px;" width="15" height="14" viewBox="0 0 15 14"><path d="M10.4 4.6 L13.6 3.3 L12.1 10.8" fill="none" stroke="#cbc9d6" stroke-width="1.5"/><path d="M4.9 4.6 Q5.6 0.9 7.9 0.9 Q10.3 0.9 10 4.6" fill="none" stroke="#c4c2cf" stroke-width="1.5"/><path d="M3 3.9 L10 4.1 Q10.7 4.2 10.6 4.9 L9.9 12.6 Q9.8 13.3 9.1 13.2 L1.1 12.9 Q0.4 12.8 0.6 12.1 L2.3 4.5 Q2.4 3.9 3 3.9z" fill="url(#lg)"/><path d="M6.6 6.6 L5.3 10.6" stroke="#2f2a66" stroke-width="1.3" fill="none"/></svg>
<span class=t style="left:1631.90px;top:458.44px;font:italic bold 12px 'Liberation Sans',sans-serif;line-height:16px;color:#fff;transform:scaleX(0.9019);">Tự động</span>
<div class=b style="left:1967px;top:415px;width:1px;height:63px;background:#000;"></div>
<span class=t style="left:1790.02px;top:426.80px;font:normal bold 15.3px 'Liberation Sans',sans-serif;line-height:20px;color:#fff;transform:scaleX(0.9839);">Bộ phận phụ trách</span>
<svg class=b style="left:1946.5px;top:430.5px;" width="16" height="10" viewBox="0 0 16 10"><rect x="0.5" y="0.3" width="15" height="1.9" fill="#4f2b86"/><rect x="3.9" y="4.4" width="8.4" height="1.4" fill="#1d0b33"/><rect x="6.4" y="7.6" width="3.2" height="1.5" fill="#2a1248"/></svg>
<svg class=b style="left:1838.4px;top:458.9px;" width="15" height="14" viewBox="0 0 15 14"><path d="M10.4 4.6 L13.6 3.3 L12.1 10.8" fill="none" stroke="#cbc9d6" stroke-width="1.5"/><path d="M4.9 4.6 Q5.6 0.9 7.9 0.9 Q10.3 0.9 10 4.6" fill="none" stroke="#c4c2cf" stroke-width="1.5"/><path d="M3 3.9 L10 4.1 Q10.7 4.2 10.6 4.9 L9.9 12.6 Q9.8 13.3 9.1 13.2 L1.1 12.9 Q0.4 12.8 0.6 12.1 L2.3 4.5 Q2.4 3.9 3 3.9z" fill="url(#lg)"/><path d="M6.6 6.6 L5.3 10.6" stroke="#2f2a66" stroke-width="1.3" fill="none"/></svg>
<span class=t style="left:1856.40px;top:458.44px;font:italic bold 12px 'Liberation Sans',sans-serif;line-height:16px;color:#fff;transform:scaleX(0.9019);">Tự động</span>
<div class=b style="left:55px;top:478px;width:1913px;height:28px;background:#e9e6fb;"></div>
<span class=t style="left:97.97px;top:483.90px;font:normal normal 15.3px 'Liberation Sans',sans-serif;line-height:20px;color:#000;transform:scaleX(0.9922);">CV-0001</span>
<span class=t style="left:220.54px;top:483.90px;font:normal normal 15.3px 'Liberation Sans',sans-serif;line-height:20px;color:#000;transform:scaleX(1.0515);">Chốt sitemap &amp; luồng trang</span>
<span class=t style="left:466.78px;top:483.90px;font:normal normal 15.3px 'Liberation Sans',sans-serif;line-height:20px;color:#000;transform:scaleX(1.0278);">Xác nhận cấu trúc trang và điều hướng</span>
<span class=t style="left:799.91px;top:483.90px;font:normal normal 15.3px 'Liberation Sans',sans-serif;line-height:20px;color:#000;transform:scaleX(1.0133);">DA-0001</span>
<span class=t style="left:912.79px;top:483.90px;font:normal normal 15.3px 'Liberation Sans',sans-serif;line-height:20px;color:#000;transform:scaleX(1.0340);">Ra mắt website công ty</span>
<svg class=b style="left:1106.7px;top:489.5px;" width="10" height="5" viewBox="0 0 10 5"><path d="M0 0H10L5 5z" fill="#6a5cf5"/></svg>
<span class=t style="left:1199.03px;top:483.90px;font:normal normal 15.3px 'Liberation Sans',sans-serif;line-height:20px;color:#000;transform:scaleX(0.9927);">NS-0001</span>
<span class=t style="left:1350.11px;top:483.90px;font:normal normal 15.3px 'Liberation Sans',sans-serif;line-height:20px;color:#000;transform:scaleX(1.0580);">Nguyễn Minh Anh</span>
<svg class=b style="left:1500.7px;top:489.5px;" width="10" height="5" viewBox="0 0 10 5"><path d="M0 0H10L5 5z" fill="#6a5cf5"/></svg>
<span class=t style="left:1539.25px;top:483.90px;font:normal normal 15.3px 'Liberation Sans',sans-serif;line-height:20px;color:#000;transform:scaleX(1.0433);">nguyenthangsbtc@gmail.com</span>
<span class=t style="left:1819.31px;top:483.90px;font:normal normal 15.3px 'Liberation Sans',sans-serif;line-height:20px;color:#000;transform:scaleX(1.0247);">Quản lý dự án</span>
<div class=b style="left:55px;top:506px;width:1913px;height:29px;background:#f3f3f3;"></div>
<span class=t style="left:97.97px;top:512.90px;font:normal normal 15.3px 'Liberation Sans',sans-serif;line-height:20px;color:#cccccc;transform:scaleX(0.9922);">CV-0002</span>
<span class=t style="left:254.49px;top:512.90px;font:normal normal 15.3px 'Liberation Sans',sans-serif;line-height:20px;color:#cccccc;transform:scaleX(1.0373);">Thiết kế trang chủ</span>
<span class=t style="left:513.98px;top:512.90px;font:normal normal 15.3px 'Liberation Sans',sans-serif;line-height:20px;color:#cccccc;transform:scaleX(1.0451);">Wireframe + UI trang chủ</span>
<span class=t style="left:799.91px;top:512.90px;font:normal normal 15.3px 'Liberation Sans',sans-serif;line-height:20px;color:#cccccc;transform:scaleX(1.0133);">DA-0002</span>
<span class=t style="left:925.68px;top:512.90px;font:normal normal 15.3px 'Liberation Sans',sans-serif;line-height:20px;color:#cccccc;transform:scaleX(1.0147);">Chiến dịch Tết 2026</span>
<svg class=b style="left:1106.7px;top:518.5px;" width="10" height="5" viewBox="0 0 10 5"><path d="M0 0H10L5 5z" fill="#7a7a7a"/></svg>
<span class=t style="left:1199.03px;top:512.90px;font:normal normal 15.3px 'Liberation Sans',sans-serif;line-height:20px;color:#cccccc;transform:scaleX(0.9927);">NS-0002</span>
<span class=t style="left:1362.00px;top:512.90px;font:normal normal 15.3px 'Liberation Sans',sans-serif;line-height:20px;color:#cccccc;transform:scaleX(1.0082);">Trần Quốc Huy</span>
<svg class=b style="left:1500.7px;top:518.5px;" width="10" height="5" viewBox="0 0 10 5"><path d="M0 0H10L5 5z" fill="#7a7a7a"/></svg>
<span class=t style="left:1579.22px;top:512.90px;font:normal normal 15.3px 'Liberation Sans',sans-serif;line-height:20px;color:#cccccc;transform:scaleX(1.0378);">Lethuy@congty.vn</span>
<span class=t style="left:1839.79px;top:512.90px;font:normal normal 15.3px 'Liberation Sans',sans-serif;line-height:20px;color:#cccccc;transform:scaleX(1.0408);">Kỹ thuật</span>
<div class=b style="left:55px;top:535px;width:1913px;height:29px;background:#e9e6fb;"></div>
<span class=t style="left:97.97px;top:541.90px;font:normal normal 15.3px 'Liberation Sans',sans-serif;line-height:20px;color:#000;transform:scaleX(0.9922);">CV-0003</span>
<span class=t style="left:233.78px;top:541.90px;font:normal normal 15.3px 'Liberation Sans',sans-serif;line-height:20px;color:#000;transform:scaleX(1.0491);">Thiết kế trang giới thiệu</span>
<span class=t style="left:539.54px;top:541.90px;font:normal normal 15.3px 'Liberation Sans',sans-serif;line-height:20px;color:#000;transform:scaleX(1.0536);">UI trang giới thiệu</span>
<span class=t style="left:799.91px;top:541.90px;font:normal normal 15.3px 'Liberation Sans',sans-serif;line-height:20px;color:#000;transform:scaleX(1.0133);">DA-0003</span>
<span class=t style="left:907.34px;top:541.90px;font:normal normal 15.3px 'Liberation Sans',sans-serif;line-height:20px;color:#000;">Nâng cấp quy trình CSKH</span>
<svg class=b style="left:1106.7px;top:547.5px;" width="10" height="5" viewBox="0 0 10 5"><path d="M0 0H10L5 5z" fill="#6a5cf5"/></svg>
<span class=t style="left:1199.03px;top:541.90px;font:normal normal 15.3px 'Liberation Sans',sans-serif;line-height:20px;color:#000;transform:scaleX(0.9927);">NS-0001</span>
<span class=t style="left:1350.11px;top:541.90px;font:normal normal 15.3px 'Liberation Sans',sans-serif;line-height:20px;color:#000;transform:scaleX(1.0580);">Nguyễn Minh Anh</span>
<svg class=b style="left:1500.7px;top:547.5px;" width="10" height="5" viewBox="0 0 10 5"><path d="M0 0H10L5 5z" fill="#6a5cf5"/></svg>
<span class=t style="left:1539.25px;top:541.90px;font:normal normal 15.3px 'Liberation Sans',sans-serif;line-height:20px;color:#000;transform:scaleX(1.0433);">nguyenthangsbtc@gmail.com</span>
<span class=t style="left:1819.31px;top:541.90px;font:normal normal 15.3px 'Liberation Sans',sans-serif;line-height:20px;color:#000;transform:scaleX(1.0247);">Quản lý dự án</span>
<div class=b style="left:55px;top:564px;width:1913px;height:29px;background:#e9e6fb;"></div>
<span class=t style="left:97.97px;top:570.90px;font:normal normal 15.3px 'Liberation Sans',sans-serif;line-height:20px;color:#000;transform:scaleX(0.9922);">CV-0004</span>
<span class=t style="left:206.30px;top:570.90px;font:normal normal 15.3px 'Liberation Sans',sans-serif;line-height:20px;color:#000;transform:scaleX(1.0549);">Dựng layout frontend trang chủ</span>
<span class=t style="left:515.83px;top:570.90px;font:normal normal 15.3px 'Liberation Sans',sans-serif;line-height:20px;color:#000;">Implement HTML/CSS/JS</span>
<span class=t style="left:799.91px;top:570.90px;font:normal normal 15.3px 'Liberation Sans',sans-serif;line-height:20px;color:#000;transform:scaleX(1.0133);">DA-0003</span>
<span class=t style="left:907.34px;top:570.90px;font:normal normal 15.3px 'Liberation Sans',sans-serif;line-height:20px;color:#000;">Nâng cấp quy trình CSKH</span>
<svg class=b style="left:1106.7px;top:576.5px;" width="10" height="5" viewBox="0 0 10 5"><path d="M0 0H10L5 5z" fill="#6a5cf5"/></svg>
<span class=t style="left:1199.03px;top:570.90px;font:normal normal 15.3px 'Liberation Sans',sans-serif;line-height:20px;color:#000;transform:scaleX(0.9927);">NS-0001</span>
<span class=t style="left:1350.11px;top:570.90px;font:normal normal 15.3px 'Liberation Sans',sans-serif;line-height:20px;color:#000;transform:scaleX(1.0580);">Nguyễn Minh Anh</span>
<svg class=b style="left:1500.7px;top:576.5px;" width="10" height="5" viewBox="0 0 10 5"><path d="M0 0H10L5 5z" fill="#6a5cf5"/></svg>
<span class=t style="left:1539.25px;top:570.90px;font:normal normal 15.3px 'Liberation Sans',sans-serif;line-height:20px;color:#000;transform:scaleX(1.0433);">nguyenthangsbtc@gmail.com</span>
<span class=t style="left:1819.31px;top:570.90px;font:normal normal 15.3px 'Liberation Sans',sans-serif;line-height:20px;color:#000;transform:scaleX(1.0247);">Quản lý dự án</span>
<div class=b style="left:55px;top:593px;width:1913px;height:29px;background:#e9e6fb;"></div>
<span class=t style="left:97.97px;top:599.90px;font:normal normal 15.3px 'Liberation Sans',sans-serif;line-height:20px;color:#000;transform:scaleX(0.9922);">CV-0005</span>
<span class=t style="left:242.42px;top:599.90px;font:normal normal 15.3px 'Liberation Sans',sans-serif;line-height:20px;color:#000;transform:scaleX(1.0409);">Tích hợp form liên hệ</span>
<span class=t style="left:534.60px;top:599.90px;font:normal normal 15.3px 'Liberation Sans',sans-serif;line-height:20px;color:#000;transform:scaleX(1.0187);">Kết nối API gửi lead</span>
<span class=t style="left:799.91px;top:599.90px;font:normal normal 15.3px 'Liberation Sans',sans-serif;line-height:20px;color:#000;transform:scaleX(1.0133);">DA-0004</span>
<span class=t style="left:939.96px;top:599.90px;font:normal normal 15.3px 'Liberation Sans',sans-serif;line-height:20px;color:#000;transform:scaleX(0.9658);">Tối ưu SEO blog</span>
<svg class=b style="left:1106.7px;top:605.5px;" width="10" height="5" viewBox="0 0 10 5"><path d="M0 0H10L5 5z" fill="#6a5cf5"/></svg>
<span class=t style="left:1199.03px;top:599.90px;font:normal normal 15.3px 'Liberation Sans',sans-serif;line-height:20px;color:#000;transform:scaleX(0.9927);">NS-0003</span>
<span class=t style="left:1360.31px;top:599.90px;font:normal normal 15.3px 'Liberation Sans',sans-serif;line-height:20px;color:#000;">Lê Thùy Dương</span>
<svg class=b style="left:1500.7px;top:605.5px;" width="10" height="5" viewBox="0 0 10 5"><path d="M0 0H10L5 5z" fill="#6a5cf5"/></svg>
<span class=t style="left:1564.82px;top:599.90px;font:normal normal 15.3px 'Liberation Sans',sans-serif;line-height:20px;color:#000;transform:scaleX(1.0530);">thuyduong@congty.vn</span>
<span class=t style="left:1840.94px;top:599.90px;font:normal normal 15.3px 'Liberation Sans',sans-serif;line-height:20px;color:#000;transform:scaleX(1.0311);">Thiết kế</span>
<div class=b style="left:55px;top:622px;width:1913px;height:29px;background:#e9e6fb;"></div>
<span class=t style="left:97.97px;top:628.90px;font:normal normal 15.3px 'Liberation Sans',sans-serif;line-height:20px;color:#000;transform:scaleX(0.9922);">CV-0006</span>
<span class=t style="left:228.14px;top:628.90px;font:normal normal 15.3px 'Liberation Sans',sans-serif;line-height:20px;color:#000;transform:scaleX(1.0620);">Kiểm thử form &amp; tracking</span>
<span class=t style="left:518.85px;top:628.90px;font:normal normal 15.3px 'Liberation Sans',sans-serif;line-height:20px;color:#000;transform:scaleX(1.0237);">Test submit + GA events</span>
<span class=t style="left:799.91px;top:628.90px;font:normal normal 15.3px 'Liberation Sans',sans-serif;line-height:20px;color:#000;transform:scaleX(1.0133);">DA-0005</span>
<span class=t style="left:906.89px;top:628.90px;font:normal normal 15.3px 'Liberation Sans',sans-serif;line-height:20px;color:#000;transform:scaleX(1.0412);">Chuẩn hóa tài liệu nội bộ</span>
<svg class=b style="left:1106.7px;top:634.5px;" width="10" height="5" viewBox="0 0 10 5"><path d="M0 0H10L5 5z" fill="#6a5cf5"/></svg>
<span class=t style="left:1199.03px;top:628.90px;font:normal normal 15.3px 'Liberation Sans',sans-serif;line-height:20px;color:#000;transform:scaleX(0.9927);">NS-0002</span>
<span class=t style="left:1362.00px;top:628.90px;font:normal normal 15.3px 'Liberation Sans',sans-serif;line-height:20px;color:#000;transform:scaleX(1.0082);">Trần Quốc Huy</span>
<svg class=b style="left:1500.7px;top:634.5px;" width="10" height="5" viewBox="0 0 10 5"><path d="M0 0H10L5 5z" fill="#6a5cf5"/></svg>
<span class=t style="left:1579.22px;top:628.90px;font:normal normal 15.3px 'Liberation Sans',sans-serif;line-height:20px;color:#000;transform:scaleX(1.0378);">Lethuy@congty.vn</span>
<span class=t style="left:1839.79px;top:628.90px;font:normal normal 15.3px 'Liberation Sans',sans-serif;line-height:20px;color:#000;transform:scaleX(1.0408);">Kỹ thuật</span>
<div class=b style="left:55px;top:651px;width:1913px;height:29px;background:#e9e6fb;"></div>
<span class=t style="left:97.97px;top:657.90px;font:normal normal 15.3px 'Liberation Sans',sans-serif;line-height:20px;color:#000;transform:scaleX(0.9922);">CV-0007</span>
<span class=t style="left:235.38px;top:657.90px;font:normal normal 15.3px 'Liberation Sans',sans-serif;line-height:20px;color:#000;transform:scaleX(1.0521);">Viết nội dung trang chủ</span>
<span class=t style="left:524.13px;top:657.90px;font:normal normal 15.3px 'Liberation Sans',sans-serif;line-height:20px;color:#000;transform:scaleX(1.0728);">Copywriting theo tone</span>
<span class=t style="left:799.91px;top:657.90px;font:normal normal 15.3px 'Liberation Sans',sans-serif;line-height:20px;color:#000;transform:scaleX(1.0133);">DA-0006</span>
<span class=t style="left:906.16px;top:657.90px;font:normal normal 15.3px 'Liberation Sans',sans-serif;line-height:20px;color:#000;transform:scaleX(1.0342);">Kiểm thử release tháng 2</span>
<svg class=b style="left:1106.7px;top:663.5px;" width="10" height="5" viewBox="0 0 10 5"><path d="M0 0H10L5 5z" fill="#6a5cf5"/></svg>
<span class=t style="left:1199.03px;top:657.90px;font:normal normal 15.3px 'Liberation Sans',sans-serif;line-height:20px;color:#000;transform:scaleX(0.9927);">NS-0005</span>
<span class=t style="left:1363.97px;top:657.90px;font:normal normal 15.3px 'Liberation Sans',sans-serif;line-height:20px;color:#000;transform:scaleX(0.9944);">Võ Thanh Tâm</span>
<svg class=b style="left:1500.7px;top:663.5px;" width="10" height="5" viewBox="0 0 10 5"><path d="M0 0H10L5 5z" fill="#6a5cf5"/></svg>
<span class=t style="left:1568.49px;top:657.90px;font:normal normal 15.3px 'Liberation Sans',sans-serif;line-height:20px;color:#000;transform:scaleX(1.0582);">thanhtam@congty.vn</span>
<span class=t style="left:1828.79px;top:657.90px;font:normal normal 15.3px 'Liberation Sans',sans-serif;line-height:20px;color:#000;transform:scaleX(1.0389);">Kinh doanh</span>
<div class=b style="left:55px;top:680px;width:1913px;height:29px;background:#e9e6fb;"></div>
<span class=t style="left:97.97px;top:686.90px;font:normal normal 15.3px 'Liberation Sans',sans-serif;line-height:20px;color:#000;transform:scaleX(0.9922);">CV-0008</span>
<span class=t style="left:215.86px;top:686.90px;font:normal normal 15.3px 'Liberation Sans',sans-serif;line-height:20px;color:#000;transform:scaleX(1.0222);">Cập nhật chính sách bảo mật</span>
<span class=t style="left:524.35px;top:686.90px;font:normal normal 15.3px 'Liberation Sans',sans-serif;line-height:20px;color:#000;transform:scaleX(1.0227);">Soạn &amp; rà soát pháp lý</span>
<span class=t style="left:799.91px;top:686.90px;font:normal normal 15.3px 'Liberation Sans',sans-serif;line-height:20px;color:#000;transform:scaleX(1.0133);">DA-0001</span>
<span class=t style="left:912.79px;top:686.90px;font:normal normal 15.3px 'Liberation Sans',sans-serif;line-height:20px;color:#000;transform:scaleX(1.0340);">Ra mắt website công ty</span>
<svg class=b style="left:1106.7px;top:692.5px;" width="10" height="5" viewBox="0 0 10 5"><path d="M0 0H10L5 5z" fill="#6a5cf5"/></svg>
<span class=t style="left:1199.03px;top:686.90px;font:normal normal 15.3px 'Liberation Sans',sans-serif;line-height:20px;color:#000;transform:scaleX(0.9927);">NS-0009</span>
<span class=t style="left:1362.37px;top:686.90px;font:normal normal 15.3px 'Liberation Sans',sans-serif;line-height:20px;color:#000;">Hoàng Yến Nhi</span>
<svg class=b style="left:1500.7px;top:692.5px;" width="10" height="5" viewBox="0 0 10 5"><path d="M0 0H10L5 5z" fill="#6a5cf5"/></svg>
<span class=t style="left:1579.28px;top:686.90px;font:normal normal 15.3px 'Liberation Sans',sans-serif;line-height:20px;color:#000;transform:scaleX(1.0438);">yennhi@congty.vn</span>
<span class=t style="left:1839.37px;top:686.90px;font:normal normal 15.3px 'Liberation Sans',sans-serif;line-height:20px;color:#000;transform:scaleX(1.0091);">Nhân sự</span>
<div class=b style="left:55px;top:709px;width:1913px;height:29px;background:#f3f3f3;"></div>
<span class=t style="left:97.97px;top:715.90px;font:normal normal 15.3px 'Liberation Sans',sans-serif;line-height:20px;color:#cccccc;transform:scaleX(0.9922);">CV-0009</span>
<span class=t style="left:226.14px;top:715.90px;font:normal normal 15.3px 'Liberation Sans',sans-serif;line-height:20px;color:#cccccc;transform:scaleX(1.0157);">Lên kế hoạch nội dung Tết</span>
<span class=t style="left:500.76px;top:715.90px;font:normal normal 15.3px 'Liberation Sans',sans-serif;line-height:20px;color:#cccccc;transform:scaleX(1.0173);">Danh sách chủ đề + lịch đăng</span>
<span class=t style="left:799.91px;top:715.90px;font:normal normal 15.3px 'Liberation Sans',sans-serif;line-height:20px;color:#cccccc;transform:scaleX(1.0133);">DA-0002</span>
<span class=t style="left:925.68px;top:715.90px;font:normal normal 15.3px 'Liberation Sans',sans-serif;line-height:20px;color:#cccccc;transform:scaleX(1.0147);">Chiến dịch Tết 2026</span>
<svg class=b style="left:1106.7px;top:721.5px;" width="10" height="5" viewBox="0 0 10 5"><path d="M0 0H10L5 5z" fill="#7a7a7a"/></svg>
<span class=t style="left:1199.03px;top:715.90px;font:normal normal 15.3px 'Liberation Sans',sans-serif;line-height:20px;color:#cccccc;transform:scaleX(0.9927);">NS-0009</span>
<span class=t style="left:1362.37px;top:715.90px;font:normal normal 15.3px 'Liberation Sans',sans-serif;line-height:20px;color:#cccccc;">Hoàng Yến Nhi</span>
<svg class=b style="left:1500.7px;top:721.5px;" width="10" height="5" viewBox="0 0 10 5"><path d="M0 0H10L5 5z" fill="#7a7a7a"/></svg>
<span class=t style="left:1579.28px;top:715.90px;font:normal normal 15.3px 'Liberation Sans',sans-serif;line-height:20px;color:#cccccc;transform:scaleX(1.0438);">yennhi@congty.vn</span>
<span class=t style="left:1839.37px;top:715.90px;font:normal normal 15.3px 'Liberation Sans',sans-serif;line-height:20px;color:#cccccc;transform:scaleX(1.0091);">Nhân sự</span>
<div class=b style="left:55px;top:738px;width:1913px;height:29px;background:#f3f3f3;"></div>
<span class=t style="left:97.97px;top:744.90px;font:normal normal 15.3px 'Liberation Sans',sans-serif;line-height:20px;color:#cccccc;transform:scaleX(0.9922);">CV-0010</span>
<span class=t style="left:253.96px;top:744.90px;font:normal normal 15.3px 'Liberation Sans',sans-serif;line-height:20px;color:#cccccc;transform:scaleX(1.0179);">Thiết kế key visual</span>
<span class=t style="left:533.20px;top:744.90px;font:normal normal 15.3px 'Liberation Sans',sans-serif;line-height:20px;color:#cccccc;transform:scaleX(0.9902);">KV cho ads và social</span>
<span class=t style="left:799.91px;top:744.90px;font:normal normal 15.3px 'Liberation Sans',sans-serif;line-height:20px;color:#cccccc;transform:scaleX(1.0133);">DA-0002</span>
<span class=t style="left:925.68px;top:744.90px;font:normal normal 15.3px 'Liberation Sans',sans-serif;line-height:20px;color:#cccccc;transform:scaleX(1.0147);">Chiến dịch Tết 2026</span>
<svg class=b style="left:1106.7px;top:750.5px;" width="10" height="5" viewBox="0 0 10 5"><path d="M0 0H10L5 5z" fill="#7a7a7a"/></svg>
<span class=t style="left:1199.03px;top:744.90px;font:normal normal 15.3px 'Liberation Sans',sans-serif;line-height:20px;color:#cccccc;transform:scaleX(0.9927);">NS-0010</span>
<span class=t style="left:1360.56px;top:744.90px;font:normal normal 15.3px 'Liberation Sans',sans-serif;line-height:20px;color:#cccccc;transform:scaleX(1.0245);">Đỗ Quang Vinh</span>
<svg class=b style="left:1500.7px;top:750.5px;" width="10" height="5" viewBox="0 0 10 5"><path d="M0 0H10L5 5z" fill="#7a7a7a"/></svg>
<span class=t style="left:1566.08px;top:744.90px;font:normal normal 15.3px 'Liberation Sans',sans-serif;line-height:20px;color:#cccccc;transform:scaleX(1.0424);">quangvinh@congty.vn</span>
<span class=t style="left:1837.83px;top:744.90px;font:normal normal 15.3px 'Liberation Sans',sans-serif;line-height:20px;color:#cccccc;transform:scaleX(0.9907);">Tài chính</span>
<div class=b style="left:55px;top:767px;width:1913px;height:29px;background:#e9e6fb;"></div>
<span class=t style="left:97.97px;top:773.90px;font:normal normal 15.3px 'Liberation Sans',sans-serif;line-height:20px;color:#000;transform:scaleX(1.0113);">CV-0011</span>
<span class=t style="left:258.42px;top:773.90px;font:normal normal 15.3px 'Liberation Sans',sans-serif;line-height:20px;color:#000;transform:scaleX(1.0329);">Viết 10 bài social</span>
<span class=t style="left:553.57px;top:773.90px;font:normal normal 15.3px 'Liberation Sans',sans-serif;line-height:20px;color:#000;transform:scaleX(0.9774);">Bài post + CTA</span>
<span class=t style="left:799.91px;top:773.90px;font:normal normal 15.3px 'Liberation Sans',sans-serif;line-height:20px;color:#000;transform:scaleX(1.0133);">DA-0002</span>
<span class=t style="left:925.68px;top:773.90px;font:normal normal 15.3px 'Liberation Sans',sans-serif;line-height:20px;color:#000;transform:scaleX(1.0147);">Chiến dịch Tết 2026</span>
<svg class=b style="left:1106.7px;top:779.5px;" width="10" height="5" viewBox="0 0 10 5"><path d="M0 0H10L5 5z" fill="#6a5cf5"/></svg>
<span class=t style="left:1199.03px;top:773.90px;font:normal normal 15.3px 'Liberation Sans',sans-serif;line-height:20px;color:#000;transform:scaleX(0.9927);">NS-0001</span>
<span class=t style="left:1350.11px;top:773.90px;font:normal normal 15.3px 'Liberation Sans',sans-serif;line-height:20px;color:#000;transform:scaleX(1.0580);">Nguyễn Minh Anh</span>
<svg class=b style="left:1500.7px;top:779.5px;" width="10" height="5" viewBox="0 0 10 5"><path d="M0 0H10L5 5z" fill="#6a5cf5"/></svg>
<span class=t style="left:1539.25px;top:773.90px;font:normal normal 15.3px 'Liberation Sans',sans-serif;line-height:20px;color:#000;transform:scaleX(1.0433);">nguyenthangsbtc@gmail.com</span>
<span class=t style="left:1819.31px;top:773.90px;font:normal normal 15.3px 'Liberation Sans',sans-serif;line-height:20px;color:#000;transform:scaleX(1.0247);">Quản lý dự án</span>
<div class=b style="left:55px;top:796px;width:1913px;height:29px;background:#e9e6fb;"></div>
<span class=t style="left:97.97px;top:802.90px;font:normal normal 15.3px 'Liberation Sans',sans-serif;line-height:20px;color:#000;transform:scaleX(0.9922);">CV-0012</span>
<span class=t style="left:221.22px;top:802.90px;font:normal normal 15.3px 'Liberation Sans',sans-serif;line-height:20px;color:#000;transform:scaleX(1.0252);">Setup chiến dịch quảng cáo</span>
<span class=t style="left:473.04px;top:802.90px;font:normal normal 15.3px 'Liberation Sans',sans-serif;line-height:20px;color:#000;transform:scaleX(1.0261);">FB/Google cấu hình nhóm quảng cáo</span>
<span class=t style="left:799.91px;top:802.90px;font:normal normal 15.3px 'Liberation Sans',sans-serif;line-height:20px;color:#000;transform:scaleX(1.0133);">DA-0001</span>
<span class=t style="left:912.79px;top:802.90px;font:normal normal 15.3px 'Liberation Sans',sans-serif;line-height:20px;color:#000;transform:scaleX(1.0340);">Ra mắt website công ty</span>
<svg class=b style="left:1106.7px;top:808.5px;" width="10" height="5" viewBox="0 0 10 5"><path d="M0 0H10L5 5z" fill="#6a5cf5"/></svg>
<span class=t style="left:1199.03px;top:802.90px;font:normal normal 15.3px 'Liberation Sans',sans-serif;line-height:20px;color:#000;transform:scaleX(0.9927);">NS-0002</span>
<span class=t style="left:1362.00px;top:802.90px;font:normal normal 15.3px 'Liberation Sans',sans-serif;line-height:20px;color:#000;transform:scaleX(1.0082);">Trần Quốc Huy</span>
<svg class=b style="left:1500.7px;top:808.5px;" width="10" height="5" viewBox="0 0 10 5"><path d="M0 0H10L5 5z" fill="#6a5cf5"/></svg>
<span class=t style="left:1579.22px;top:802.90px;font:normal normal 15.3px 'Liberation Sans',sans-serif;line-height:20px;color:#000;transform:scaleX(1.0378);">Lethuy@congty.vn</span>
<span class=t style="left:1839.79px;top:802.90px;font:normal normal 15.3px 'Liberation Sans',sans-serif;line-height:20px;color:#000;transform:scaleX(1.0408);">Kỹ thuật</span>
<div class=b style="left:55px;top:825px;width:1913px;height:29px;background:#9b5de0;"></div>
<span class=t style="left:97.97px;top:831.90px;font:normal normal 15.3px 'Liberation Sans',sans-serif;line-height:20px;color:#fff;transform:scaleX(0.9922);">CV-0013</span>
<span class=t style="left:246.36px;top:831.90px;font:normal normal 15.3px 'Liberation Sans',sans-serif;line-height:20px;color:#fff;transform:scaleX(1.0149);">Theo dõi chỉ số ngày</span>
<span class=t style="left:506.87px;top:831.90px;font:normal normal 15.3px 'Liberation Sans',sans-serif;line-height:20px;color:#fff;transform:scaleX(1.0376);">Báo cáo chỉ tiêu &amp; hiệu quả</span>
<span class=t style="left:799.91px;top:831.90px;font:normal normal 15.3px 'Liberation Sans',sans-serif;line-height:20px;color:#fff;transform:scaleX(1.0133);">DA-0001</span>
<span class=t style="left:912.79px;top:831.90px;font:normal normal 15.3px 'Liberation Sans',sans-serif;line-height:20px;color:#fff;transform:scaleX(1.0340);">Ra mắt website công ty</span>
<svg class=b style="left:1106.7px;top:837.5px;" width="10" height="5" viewBox="0 0 10 5"><path d="M0 0H10L5 5z" fill="#3d1a6b"/></svg>
<span class=t style="left:1199.03px;top:831.90px;font:normal normal 15.3px 'Liberation Sans',sans-serif;line-height:20px;color:#fff;transform:scaleX(0.9927);">NS-0003</span>
<span class=t style="left:1360.31px;top:831.90px;font:normal normal 15.3px 'Liberation Sans',sans-serif;line-height:20px;color:#fff;">Lê Thùy Dương</span>
<svg class=b style="left:1500.7px;top:837.5px;" width="10" height="5" viewBox="0 0 10 5"><path d="M0 0H10L5 5z" fill="#3d1a6b"/></svg>
<span class=t style="left:1564.82px;top:831.90px;font:normal normal 15.3px 'Liberation Sans',sans-serif;line-height:20px;color:#fff;transform:scaleX(1.0530);">thuyduong@congty.vn</span>
<span class=t style="left:1840.94px;top:831.90px;font:normal normal 15.3px 'Liberation Sans',sans-serif;line-height:20px;color:#fff;transform:scaleX(1.0311);">Thiết kế</span>
<div class=b style="left:55px;top:854px;width:1913px;height:29px;background:#e9e6fb;"></div>
<span class=t style="left:97.97px;top:860.90px;font:normal normal 15.3px 'Liberation Sans',sans-serif;line-height:20px;color:#000;transform:scaleX(0.9922);">CV-0014</span>
<span class=t style="left:229.81px;top:860.90px;font:normal normal 15.3px 'Liberation Sans',sans-serif;line-height:20px;color:#000;transform:scaleX(1.0176);">Phối hợp sales nhận lead</span>
<span class=t style="left:512.43px;top:860.90px;font:normal normal 15.3px 'Liberation Sans',sans-serif;line-height:20px;color:#000;transform:scaleX(1.0549);">Quy trình phản hồi nhanh</span>
<span class=t style="left:799.91px;top:860.90px;font:normal normal 15.3px 'Liberation Sans',sans-serif;line-height:20px;color:#000;transform:scaleX(1.0133);">DA-0001</span>
<span class=t style="left:912.79px;top:860.90px;font:normal normal 15.3px 'Liberation Sans',sans-serif;line-height:20px;color:#000;transform:scaleX(1.0340);">Ra mắt website công ty</span>
<svg class=b style="left:1106.7px;top:866.5px;" width="10" height="5" viewBox="0 0 10 5"><path d="M0 0H10L5 5z" fill="#6a5cf5"/></svg>
<span class=t style="left:1199.03px;top:860.90px;font:normal normal 15.3px 'Liberation Sans',sans-serif;line-height:20px;color:#000;transform:scaleX(0.9927);">NS-0004</span>
<span class=t style="left:1364.60px;top:860.90px;font:normal normal 15.3px 'Liberation Sans',sans-serif;line-height:20px;color:#000;transform:scaleX(0.9932);">Phạm Gia Bảo</span>
<svg class=b style="left:1500.7px;top:866.5px;" width="10" height="5" viewBox="0 0 10 5"><path d="M0 0H10L5 5z" fill="#6a5cf5"/></svg>
<span class=t style="left:1579.57px;top:860.90px;font:normal normal 15.3px 'Liberation Sans',sans-serif;line-height:20px;color:#000;transform:scaleX(1.0321);">giabao@congty.vn</span>
<span class=t style="left:1832.79px;top:860.90px;font:normal normal 15.3px 'Liberation Sans',sans-serif;line-height:20px;color:#000;transform:scaleX(1.0782);">Marketing</span>
<div class=b style="left:55px;top:883px;width:1913px;height:29px;background:#e9e6fb;"></div>
<span class=t style="left:97.97px;top:889.90px;font:normal normal 15.3px 'Liberation Sans',sans-serif;line-height:20px;color:#000;transform:scaleX(0.9922);">CV-0015</span>
<span class=t style="left:233.56px;top:889.90px;font:normal normal 15.3px 'Liberation Sans',sans-serif;line-height:20px;color:#000;transform:scaleX(1.0289);">Khảo sát vấn đề hiện tại</span>
<span class=t style="left:496.37px;top:889.90px;font:normal normal 15.3px 'Liberation Sans',sans-serif;line-height:20px;color:#000;transform:scaleX(1.0366);">Thu thập phản hồi khách hàng</span>
<span class=t style="left:799.91px;top:889.90px;font:normal normal 15.3px 'Liberation Sans',sans-serif;line-height:20px;color:#000;transform:scaleX(1.0133);">DA-0002</span>
<span class=t style="left:925.68px;top:889.90px;font:normal normal 15.3px 'Liberation Sans',sans-serif;line-height:20px;color:#000;transform:scaleX(1.0147);">Chiến dịch Tết 2026</span>
<svg class=b style="left:1106.7px;top:895.5px;" width="10" height="5" viewBox="0 0 10 5"><path d="M0 0H10L5 5z" fill="#6a5cf5"/></svg>
<span class=t style="left:1199.03px;top:889.90px;font:normal normal 15.3px 'Liberation Sans',sans-serif;line-height:20px;color:#000;transform:scaleX(0.9927);">NS-0005</span>
<span class=t style="left:1363.97px;top:889.90px;font:normal normal 15.3px 'Liberation Sans',sans-serif;line-height:20px;color:#000;transform:scaleX(0.9944);">Võ Thanh Tâm</span>
<svg class=b style="left:1500.7px;top:895.5px;" width="10" height="5" viewBox="0 0 10 5"><path d="M0 0H10L5 5z" fill="#6a5cf5"/></svg>
<span class=t style="left:1568.49px;top:889.90px;font:normal normal 15.3px 'Liberation Sans',sans-serif;line-height:20px;color:#000;transform:scaleX(1.0582);">thanhtam@congty.vn</span>
<span class=t style="left:1828.79px;top:889.90px;font:normal normal 15.3px 'Liberation Sans',sans-serif;line-height:20px;color:#000;transform:scaleX(1.0389);">Kinh doanh</span>
<div class=b style="left:55px;top:912px;width:1913px;height:29px;background:#9b5de0;"></div>
<span class=t style="left:97.97px;top:918.90px;font:normal normal 15.3px 'Liberation Sans',sans-serif;line-height:20px;color:#fff;transform:scaleX(0.9922);">CV-0016</span>
<span class=t style="left:218.74px;top:918.90px;font:normal normal 15.3px 'Liberation Sans',sans-serif;line-height:20px;color:#fff;transform:scaleX(1.0386);">Đề xuất kịch bản trả lời mẫu</span>
<span class=t style="left:524.50px;top:918.90px;font:normal normal 15.3px 'Liberation Sans',sans-serif;line-height:20px;color:#fff;transform:scaleX(1.0222);">Soạn macro câu trả lời</span>
<span class=t style="left:799.91px;top:918.90px;font:normal normal 15.3px 'Liberation Sans',sans-serif;line-height:20px;color:#fff;transform:scaleX(1.0133);">DA-0003</span>
<span class=t style="left:907.34px;top:918.90px;font:normal normal 15.3px 'Liberation Sans',sans-serif;line-height:20px;color:#fff;">Nâng cấp quy trình CSKH</span>
<svg class=b style="left:1106.7px;top:924.5px;" width="10" height="5" viewBox="0 0 10 5"><path d="M0 0H10L5 5z" fill="#3d1a6b"/></svg>
<span class=t style="left:1199.03px;top:918.90px;font:normal normal 15.3px 'Liberation Sans',sans-serif;line-height:20px;color:#fff;transform:scaleX(0.9927);">NS-0006</span>
<span class=t style="left:1358.74px;top:918.90px;font:normal normal 15.3px 'Liberation Sans',sans-serif;line-height:20px;color:#fff;transform:scaleX(1.0156);">Đặng Hoài Nam</span>
<svg class=b style="left:1500.7px;top:924.5px;" width="10" height="5" viewBox="0 0 10 5"><path d="M0 0H10L5 5z" fill="#3d1a6b"/></svg>
<span class=t style="left:1572.13px;top:918.90px;font:normal normal 15.3px 'Liberation Sans',sans-serif;line-height:20px;color:#fff;transform:scaleX(1.0447);">hoainam@congty.vn</span>
<span class=t style="left:1839.79px;top:918.90px;font:normal normal 15.3px 'Liberation Sans',sans-serif;line-height:20px;color:#fff;transform:scaleX(1.0408);">Kỹ thuật</span>
<div class=b style="left:55px;top:941px;width:1913px;height:29px;background:#e9e6fb;"></div>
<span class=t style="left:97.97px;top:947.90px;font:normal normal 15.3px 'Liberation Sans',sans-serif;line-height:20px;color:#000;transform:scaleX(0.9922);">CV-0017</span>
<span class=t style="left:224.92px;top:947.90px;font:normal normal 15.3px 'Liberation Sans',sans-serif;line-height:20px;color:#000;transform:scaleX(1.0229);">Tạo form ghi nhận yêu cầu</span>
<span class=t style="left:511.88px;top:947.90px;font:normal normal 15.3px 'Liberation Sans',sans-serif;line-height:20px;color:#000;transform:scaleX(1.0511);">Form chuẩn hóa thông tin</span>
<span class=t style="left:799.91px;top:947.90px;font:normal normal 15.3px 'Liberation Sans',sans-serif;line-height:20px;color:#000;transform:scaleX(1.0133);">DA-0004</span>
<span class=t style="left:939.96px;top:947.90px;font:normal normal 15.3px 'Liberation Sans',sans-serif;line-height:20px;color:#000;transform:scaleX(0.9658);">Tối ưu SEO blog</span>
<svg class=b style="left:1106.7px;top:953.5px;" width="10" height="5" viewBox="0 0 10 5"><path d="M0 0H10L5 5z" fill="#6a5cf5"/></svg>
<span class=t style="left:1199.03px;top:947.90px;font:normal normal 15.3px 'Liberation Sans',sans-serif;line-height:20px;color:#000;transform:scaleX(0.9927);">NS-0007</span>
<span class=t style="left:1362.78px;top:947.90px;font:normal normal 15.3px 'Liberation Sans',sans-serif;line-height:20px;color:#000;transform:scaleX(0.9956);">Ngô Bích Ngọc</span>
<svg class=b style="left:1500.7px;top:953.5px;" width="10" height="5" viewBox="0 0 10 5"><path d="M0 0H10L5 5z" fill="#6a5cf5"/></svg>
<span class=t style="left:1571.45px;top:947.90px;font:normal normal 15.3px 'Liberation Sans',sans-serif;line-height:20px;color:#000;transform:scaleX(1.0354);">bichngoc@congty.vn</span>
<span class=t style="left:1833.94px;top:947.90px;font:normal normal 15.3px 'Liberation Sans',sans-serif;line-height:20px;color:#000;transform:scaleX(1.0056);">Sản phẩm</span>
<div class=b style="left:55px;top:970px;width:1913px;height:29px;background:#e9e6fb;"></div>
<span class=t style="left:97.97px;top:976.90px;font:normal normal 15.3px 'Liberation Sans',sans-serif;line-height:20px;color:#000;transform:scaleX(0.9922);">CV-0018</span>
<span class=t style="left:244.86px;top:976.90px;font:normal normal 15.3px 'Liberation Sans',sans-serif;line-height:20px;color:#000;transform:scaleX(1.0178);">Audit SEO hiện trạng</span>
<span class=t style="left:502.62px;top:976.90px;font:normal normal 15.3px 'Liberation Sans',sans-serif;line-height:20px;color:#000;transform:scaleX(1.0384);">Checklist technical + content</span>
<span class=t style="left:799.91px;top:976.90px;font:normal normal 15.3px 'Liberation Sans',sans-serif;line-height:20px;color:#000;transform:scaleX(1.0133);">DA-0004</span>
<span class=t style="left:939.96px;top:976.90px;font:normal normal 15.3px 'Liberation Sans',sans-serif;line-height:20px;color:#000;transform:scaleX(0.9658);">Tối ưu SEO blog</span>
<svg class=b style="left:1106.7px;top:982.5px;" width="10" height="5" viewBox="0 0 10 5"><path d="M0 0H10L5 5z" fill="#6a5cf5"/></svg>
<span class=t style="left:1199.03px;top:976.90px;font:normal normal 15.3px 'Liberation Sans',sans-serif;line-height:20px;color:#000;transform:scaleX(0.9927);">NS-0008</span>
<span class=t style="left:1367.37px;top:976.90px;font:normal normal 15.3px 'Liberation Sans',sans-serif;line-height:20px;color:#000;">Bùi Đức Long</span>
<svg class=b style="left:1500.7px;top:982.5px;" width="10" height="5" viewBox="0 0 10 5"><path d="M0 0H10L5 5z" fill="#6a5cf5"/></svg>
<span class=t style="left:1575.07px;top:976.90px;font:normal normal 15.3px 'Liberation Sans',sans-serif;line-height:20px;color:#000;transform:scaleX(1.0404);">duclong@congty.vn</span>
<span class=t style="left:1839.79px;top:976.90px;font:normal normal 15.3px 'Liberation Sans',sans-serif;line-height:20px;color:#000;transform:scaleX(1.0408);">Kỹ thuật</span>
<div class=b style="left:55px;top:999px;width:1913px;height:29px;background:#ffffff;"></div>
<span class=t style="left:97.97px;top:1005.90px;font:normal normal 15.3px 'Liberation Sans',sans-serif;line-height:20px;color:#000;transform:scaleX(0.9922);">CV-0019</span>
<span class=t style="left:225.19px;top:1005.90px;font:normal normal 15.3px 'Liberation Sans',sans-serif;line-height:20px;color:#000;transform:scaleX(1.0699);">Sửa meta title/description</span>
<span class=t style="left:521.43px;top:1005.90px;font:normal normal 15.3px 'Liberation Sans',sans-serif;line-height:20px;color:#000;transform:scaleX(1.0451);">Tối ưu 20 bài top traffic</span>
<span class=t style="left:799.91px;top:1005.90px;font:normal normal 15.3px 'Liberation Sans',sans-serif;line-height:20px;color:#000;transform:scaleX(1.0133);">DA-0004</span>
<span class=t style="left:939.96px;top:1005.90px;font:normal normal 15.3px 'Liberation Sans',sans-serif;line-height:20px;color:#000;transform:scaleX(0.9658);">Tối ưu SEO blog</span>
<svg class=b style="left:1106.7px;top:1011.5px;" width="10" height="5" viewBox="0 0 10 5"><path d="M0 0H10L5 5z" fill="#7a7a7a"/></svg>
<span class=t style="left:1199.03px;top:1005.90px;font:normal normal 15.3px 'Liberation Sans',sans-serif;line-height:20px;color:#000;transform:scaleX(0.9927);">NS-0009</span>
<span class=t style="left:1362.37px;top:1005.90px;font:normal normal 15.3px 'Liberation Sans',sans-serif;line-height:20px;color:#000;">Hoàng Yến Nhi</span>
<svg class=b style="left:1500.7px;top:1011.5px;" width="10" height="5" viewBox="0 0 10 5"><path d="M0 0H10L5 5z" fill="#7a7a7a"/></svg>
<span class=t style="left:1579.28px;top:1005.90px;font:normal normal 15.3px 'Liberation Sans',sans-serif;line-height:20px;color:#000;transform:scaleX(1.0438);">yennhi@congty.vn</span>
<span class=t style="left:1839.37px;top:1005.90px;font:normal normal 15.3px 'Liberation Sans',sans-serif;line-height:20px;color:#000;transform:scaleX(1.0091);">Nhân sự</span>
<div class=b style="left:57px;top:506px;width:1847px;height:1px;background:repeating-linear-gradient(90deg,#000 0 2px,transparent 2px 4px)"></div>
<div class=b style="left:57px;top:535px;width:1847px;height:1px;background:repeating-linear-gradient(90deg,#000 0 2px,transparent 2px 4px)"></div>
<div class=b style="left:57px;top:564px;width:1847px;height:1px;background:repeating-linear-gradient(90deg,#000 0 2px,transparent 2px 4px)"></div>
<div class=b style="left:57px;top:593px;width:1847px;height:1px;background:repeating-linear-gradient(90deg,#000 0 2px,transparent 2px 4px)"></div>
<div class=b style="left:57px;top:622px;width:1847px;height:1px;background:repeating-linear-gradient(90deg,#000 0 2px,transparent 2px 4px)"></div>
<div class=b style="left:57px;top:651px;width:1847px;height:1px;background:repeating-linear-gradient(90deg,#000 0 2px,transparent 2px 4px)"></div>
<div class=b style="left:57px;top:680px;width:1847px;height:1px;background:repeating-linear-gradient(90deg,#000 0 2px,transparent 2px 4px)"></div>
<div class=b style="left:57px;top:709px;width:1847px;height:1px;background:repeating-linear-gradient(90deg,#000 0 2px,transparent 2px 4px)"></div>
<div class=b style="left:57px;top:738px;width:1847px;height:1px;background:repeating-linear-gradient(90deg,#000 0 2px,transparent 2px 4px)"></div>
<div class=b style="left:57px;top:767px;width:1847px;height:1px;background:repeating-linear-gradient(90deg,#000 0 2px,transparent 2px 4px)"></div>
<div class=b style="left:57px;top:796px;width:1847px;height:1px;background:repeating-linear-gradient(90deg,#000 0 2px,transparent 2px 4px)"></div>
<div class=b style="left:57px;top:825px;width:1847px;height:1px;background:repeating-linear-gradient(90deg,#000 0 2px,transparent 2px 4px)"></div>
<div class=b style="left:57px;top:854px;width:1847px;height:1px;background:repeating-linear-gradient(90deg,#000 0 2px,transparent 2px 4px)"></div>
<div class=b style="left:57px;top:883px;width:1847px;height:1px;background:repeating-linear-gradient(90deg,#000 0 2px,transparent 2px 4px)"></div>
<div class=b style="left:57px;top:912px;width:1847px;height:1px;background:repeating-linear-gradient(90deg,#000 0 2px,transparent 2px 4px)"></div>
<div class=b style="left:57px;top:941px;width:1847px;height:1px;background:repeating-linear-gradient(90deg,#000 0 2px,transparent 2px 4px)"></div>
<div class=b style="left:57px;top:970px;width:1847px;height:1px;background:repeating-linear-gradient(90deg,#000 0 2px,transparent 2px 4px)"></div>
<div class=b style="left:57px;top:999px;width:1847px;height:1px;background:repeating-linear-gradient(90deg,#000 0 2px,transparent 2px 4px)"></div>
<div class=b style="left:57px;top:1028px;width:1847px;height:1px;background:repeating-linear-gradient(90deg,#000 0 2px,transparent 2px 4px)"></div>
<div class=b style="left:200px;top:478px;width:1px;height:560px;background:repeating-linear-gradient(180deg,#000 0 2px,transparent 2px 4px)"></div>
<div class=b style="left:435px;top:478px;width:1px;height:560px;background:repeating-linear-gradient(180deg,#000 0 2px,transparent 2px 4px)"></div>
<div class=b style="left:771px;top:478px;width:1px;height:560px;background:repeating-linear-gradient(180deg,#000 0 2px,transparent 2px 4px)"></div>
<div class=b style="left:889px;top:478px;width:1px;height:560px;background:repeating-linear-gradient(180deg,#000 0 2px,transparent 2px 4px)"></div>
<div class=b style="left:1124px;top:478px;width:1px;height:560px;background:repeating-linear-gradient(180deg,#000 0 2px,transparent 2px 4px)"></div>
<div class=b style="left:1333px;top:478px;width:1px;height:560px;background:repeating-linear-gradient(180deg,#000 0 2px,transparent 2px 4px)"></div>
<div class=b style="left:1518px;top:478px;width:1px;height:560px;background:repeating-linear-gradient(180deg,#000 0 2px,transparent 2px 4px)"></div>
<div class=b style="left:1770px;top:478px;width:1px;height:560px;background:repeating-linear-gradient(180deg,#000 0 2px,transparent 2px 4px)"></div>
<div class=b style="left:1967px;top:478px;width:1px;height:560px;background:repeating-linear-gradient(180deg,#000 0 2px,transparent 2px 4px)"></div>
<svg class=b style="left:74px;top:260px" width="170" height="52" viewBox="0 0 1920 587"><g fill="none" stroke="#000" stroke-linecap="round" stroke-linejoin="round"><path d="M72 152 Q 110 112 190 120 Q 260 128 318 116" stroke-width="24"/><path d="M214 128 Q 190 200 150 300 Q 120 380 104 436" stroke-width="38"/><path d="M338 312 Q 285 285 245 340 Q 210 395 240 414 Q 280 420 338 312 Q 308 380 322 408 Q 345 428 395 372" stroke-width="15"/><path d="M262 322 Q 212 388 242 413" stroke-width="30"/><path d="M338 314 Q 308 380 323 407" stroke-width="28"/><path d="M395 372 Q 480 290 532 175 Q 555 112 528 118 Q 490 150 455 320 Q 440 405 478 418 Q 540 410 562 345 Q 568 300 528 308 Q 545 352 592 338" stroke-width="15"/><path d="M524 132 Q 482 200 456 325 Q 444 400 476 416" stroke-width="30"/><path d="M560 350 Q 566 305 532 310" stroke-width="22"/><path d="M815 292 Q 750 255 708 322 Q 672 395 712 414 Q 760 415 815 292 Q 790 400 778 505 Q 768 545 758 505 Q 762 450 838 398" stroke-width="15"/><path d="M726 305 Q 676 388 712 413" stroke-width="30"/><path d="M815 294 Q 792 400 779 498" stroke-width="28"/><path d="M852 300 Q 820 385 842 410 Q 880 420 945 296 Q 915 385 938 410 Q 965 424 1015 360" stroke-width="15"/><path d="M852 300 Q 821 384 842 408" stroke-width="28"/><path d="M945 298 Q 916 384 938 408" stroke-width="28"/><path d="M1128 302 Q 1075 278 1036 338 Q 1005 398 1040 414 Q 1085 415 1128 302 Q 1100 380 1120 408 Q 1142 424 1188 368" stroke-width="15"/><path d="M1052 320 Q 1008 392 1040 413" stroke-width="30"/><path d="M1128 304 Q 1100 380 1120 406" stroke-width="28"/><path d="M1168 218 Q 1198 188 1220 212 Q 1230 240 1192 256" stroke-width="14"/><path d="M1205 300 Q 1195 350 1172 412 Q 1230 300 1290 300 Q 1325 310 1302 370 Q 1290 412 1332 410 Q 1385 398 1440 338" stroke-width="15"/><path d="M1205 302 Q 1196 350 1174 410" stroke-width="28"/><path d="M1308 318 Q 1316 345 1302 372 Q 1292 405 1322 410" stroke-width="26"/><path d="M1548 405 Q 1640 300 1692 165 Q 1705 105 1672 122 Q 1625 180 1575 375 Q 1565 420 1602 410 Q 1655 388 1702 318" stroke-width="15"/><path d="M1670 134 Q 1625 190 1577 372 Q 1568 412 1596 411" stroke-width="30"/><path d="M1722 300 Q 1690 382 1712 402 Q 1752 405 1808 292 Q 1790 400 1742 488 Q 1695 545 1652 520 Q 1640 488 1702 458 Q 1782 420 1830 340" stroke-width="15"/><path d="M1722 302 Q 1691 380 1712 400" stroke-width="26"/><path d="M1808 294 Q 1792 398 1746 482" stroke-width="28"/><path d="M1742 232 L 1792 194" stroke-width="17"/></g></svg>
<svg class=b style="left:256px;top:254px;" width="66" height="62" viewBox="0 0 66 62"><path d="M23.5 14 V8 Q23.5 2.5 29 2.5 H37 Q42.5 2.5 42.5 8 V14" fill="none" stroke="#7b4dd4" stroke-width="3"/><path d="M4 13 H62 Q66 13 66 17 V28.5 L33 41 L0 28.5 V17 Q0 13 4 13z" fill="#7b4dd4"/><path d="M3.5 33.5 L33 44.8 L62.5 33.5 V57 Q62.5 61 58.5 61 H7.5 Q3.5 61 3.5 57z" fill="#7b4dd4"/></svg>
<span class=t style="left:78.20px;top:319.45px;font:normal bold 44.3px 'Liberation Sans',sans-serif;line-height:58px;color:#9b5de0;transform:scaleX(0.6600);-webkit-text-stroke:1.2px #9b5de0;">THÔNG TIN CÔNG VIỆC</span>
<svg class=b style="left:443.1px;top:304.0px;" width="217.8" height="69.8" viewBox="0 0 217.8 69.8"><rect x="2.3" y="2.3" width="213.2" height="65.2" rx="8.4" fill="#fff" stroke="#8a4be8" stroke-width="4.6"/></svg>
<svg class=b style="left:670.2px;top:304.0px;" width="211.0" height="69.8" viewBox="0 0 211.0 69.8"><rect x="2.3" y="2.3" width="206.4" height="65.2" rx="8.4" fill="#fff" stroke="#8a4be8" stroke-width="4.6"/></svg>
<svg class=b style="left:892.3px;top:304.0px;" width="221.5" height="69.8" viewBox="0 0 221.5 69.8"><rect x="2.3" y="2.3" width="216.9" height="65.2" rx="8.4" fill="#fff" stroke="#8a4be8" stroke-width="4.6"/></svg>
<svg class=b style="left:467px;top:316px;" width="39" height="46" viewBox="0 0 39 46"><path d="M3 0 H25 L39 14 V43 Q39 46 36 46 H3 Q0 46 0 43 V3 Q0 0 3 0z" fill="#8a4be8"/><path d="M25 0 L39 14 H28 Q25 14 25 11z" fill="#5b2fb8"/><rect x="7.5" y="13" width="3.6" height="24" rx="1" fill="#fff"/><rect x="14" y="17.5" width="3.6" height="19.5" rx="1" fill="#fff"/><rect x="20.7" y="23" width="3.6" height="14" rx="1" fill="#fff"/><rect x="27.4" y="24" width="3.6" height="13" rx="1" fill="#fff"/></svg>
<span class=t style="left:519.00px;top:324.07px;font:normal bold 22.6px 'Liberation Sans',sans-serif;line-height:29px;color:#8a4be8;transform:scaleX(0.7596);-webkit-text-stroke:.8px #8a4be8;">XEM BÁO CÁO</span>
<svg class=b style="left:691px;top:323px;" width="45" height="32" viewBox="0 0 45 32"><circle cx="13.5" cy="7.2" r="7.2" fill="#6a26b5"/><path d="M0 32 V29 Q0 17 13.5 17 Q23 17 26.5 23.5 Q24 27 24 32z" fill="#6a26b5"/><circle cx="35" cy="14.5" r="4.9" fill="#6a26b5"/><path d="M26 32 V30.5 Q26 21.5 35 21.5 Q44.5 21.5 44.5 30.5 V32z" fill="#6a26b5"/></svg>
<span class=t style="left:755.00px;top:323.08px;font:normal bold 29.5px 'Liberation Sans',sans-serif;line-height:38px;color:#8a4be8;transform:scaleX(0.6615);-webkit-text-stroke:.9px #8a4be8;">NHÂN SỰ</span>
<svg class=b style="left:906px;top:322px;" width="47" height="37" viewBox="0 0 47 37"><path d="M0 5.2 L23.2 26.6 L46.4 5.2 V34 Q46.4 36.9 43.4 36.9 H3 Q0 36.9 0 34z" fill="#7b4dd4"/><path d="M3.4 0.7 H43 L23.2 19.8z" fill="#7b4dd4"/></svg>
<span class=t style="left:965.50px;top:321.99px;font:normal bold 26px 'Liberation Sans',sans-serif;line-height:34px;color:#8a4be8;transform:scaleX(0.6298);-webkit-text-stroke:.8px #8a4be8;">GỬI NHẮC VIỆC</span>
<div class=b style="left:1124px;top:342px;width:206px;height:20px;border:2px solid #1a73e8"></div>
<div class=b style="left:1329px;top:361px;width:10px;height:10px;border-radius:50%;background:#0b57d0"></div></div></div>
<div class=b style="left:1906px;top:169px;width:14px;height:866px;background:#ffffff;"></div>
<div class=b style="left:1906px;top:169px;width:1px;height:866px;background:#e1e1e1;"></div>
<div class=b style="left:1906px;top:169px;width:14px;height:30px;background:#f8f9fa;"></div>
<div class=b style="left:1906px;top:198px;width:14px;height:1px;background:#c4c7c5;"></div>
<div class=b style="left:1906px;top:169px;width:14px;height:1px;background:#c4c7c5;"></div>
<div class=b style="left:1908px;top:200px;width:11px;height:31px;border-radius:5.5px;background:#d9d9d9"></div>
<div class=b style="left:1906px;top:982px;width:14px;height:38px;background:#f8f9fa;"></div>
<div class=b style="left:1906px;top:982px;width:14px;height:1px;background:#e1e1e1;"></div>
<div class=b style="left:1906px;top:1001px;width:14px;height:1px;background:#e1e1e1;"></div>
<svg class=b style="left:1910.5px;top:988.8px;" width="6.4" height="4" viewBox="0 0 6.4 4"><path d="M0 4H6.4L3.2 0z" fill="#c9c9c9"/></svg>
<svg class=b style="left:1910.5px;top:1009px;" width="6.4" height="4" viewBox="0 0 6.4 4"><path d="M0 0H6.4L3.2 4z" fill="#a6a6a6"/></svg>
<div class=b style="left:0px;top:1020px;width:1920px;height:15px;background:#ffffff;"></div>
<div class=b style="left:0px;top:1020px;width:1920px;height:1px;background:#e1e1e1;"></div>
<div class=b style="left:54px;top:1020px;width:1px;height:15px;background:#c4c7c5;"></div>
<div class=b style="left:73px;top:1022px;width:594px;height:10px;border-radius:5px;background:#dadada"></div>
<div class=b style="left:1868px;top:1021px;width:38px;height:14px;background:#f8f9fa;"></div>
<div class=b style="left:1868px;top:1021px;width:1px;height:14px;background:#e1e1e1;"></div>
<div class=b style="left:1887px;top:1021px;width:1px;height:14px;background:#e1e1e1;"></div>
<div class=b style="left:1906px;top:1021px;width:1px;height:14px;background:#e1e1e1;"></div>
<svg class=b style="left:1875px;top:1025px;" width="4" height="6" viewBox="0 0 4 6"><path d="M4 0V6L0 3z" fill="#c9c9c9"/></svg>
<svg class=b style="left:1895px;top:1025px;" width="4" height="6" viewBox="0 0 4 6"><path d="M0 0V6L4 3z" fill="#a6a6a6"/></svg>
<div class=b style="left:0px;top:1035px;width:1920px;height:45px;background:#f9fbfd;"></div>
<div class=b style="left:0px;top:1035px;width:1920px;height:1px;background:#e1e3e1;"></div>
<div class=b style="left:516px;top:1036px;width:136px;height:44px;background:#e1e9f7;"></div>
<svg class=b style="left:67px;top:1051px;" width="14" height="14" viewBox="0 0 14 14"><path d="M7 .5V13.5M.5 7H13.5" stroke="#444746" stroke-width="1.9" fill="none"/></svg>
<svg class=b style="left:112px;top:1052px;" width="18" height="12" viewBox="0 0 18 12"><path d="M0 1H18M0 6H18M0 11H18" stroke="#444746" stroke-width="1.9" fill="none"/></svg>
<span class=t style="left:174.50px;top:1047.65px;font:normal normal 16.6px 'Liberation Sans',sans-serif;line-height:22px;color:#444746;transform:scaleX(1.1039);-webkit-text-stroke:.35px #444746;">Danh mục</span>
<svg class=b style="left:271px;top:1056px;" width="10" height="5" viewBox="0 0 10 5"><path d="M0 0H10L5 5z" fill="#444746"/></svg>
<span class=t style="left:310.50px;top:1047.65px;font:normal normal 16.6px 'Liberation Sans',sans-serif;line-height:22px;color:#444746;transform:scaleX(1.0756);-webkit-text-stroke:.35px #444746;">Nhân sự</span>
<svg class=b style="left:391px;top:1056px;" width="10" height="5" viewBox="0 0 10 5"><path d="M0 0H10L5 5z" fill="#444746"/></svg>
<span class=t style="left:430.50px;top:1047.65px;font:normal normal 16.6px 'Liberation Sans',sans-serif;line-height:22px;color:#444746;transform:scaleX(1.0504);-webkit-text-stroke:.35px #444746;">Dự án</span>
<svg class=b style="left:492px;top:1056px;" width="10" height="5" viewBox="0 0 10 5"><path d="M0 0H10L5 5z" fill="#444746"/></svg>
<span class=t style="left:530.00px;top:1047.65px;font:normal bold 16.6px 'Liberation Sans',sans-serif;line-height:22px;color:#0b57d0;transform:scaleX(1.0780);">Công việc</span>
<svg class=b style="left:628.5px;top:1056px;" width="10" height="5" viewBox="0 0 10 5"><path d="M0 0H10L5 5z" fill="#0b57d0"/></svg>
<span class=t style="left:666.50px;top:1047.65px;font:normal normal 16.6px 'Liberation Sans',sans-serif;line-height:22px;color:#444746;transform:scaleX(1.1064);-webkit-text-stroke:.35px #444746;">Cấu hình email</span>
<svg class=b style="left:803px;top:1056px;" width="10" height="5" viewBox="0 0 10 5"><path d="M0 0H10L5 5z" fill="#444746"/></svg>
<svg class=b style="left:1881.5px;top:1054.5px;" width="9" height="13" viewBox="0 0 9 13"><path d="M7.4 1L1.8 6.5L7.4 12" stroke="#444746" stroke-width="2" fill="none"/></svg>
</body></html>
